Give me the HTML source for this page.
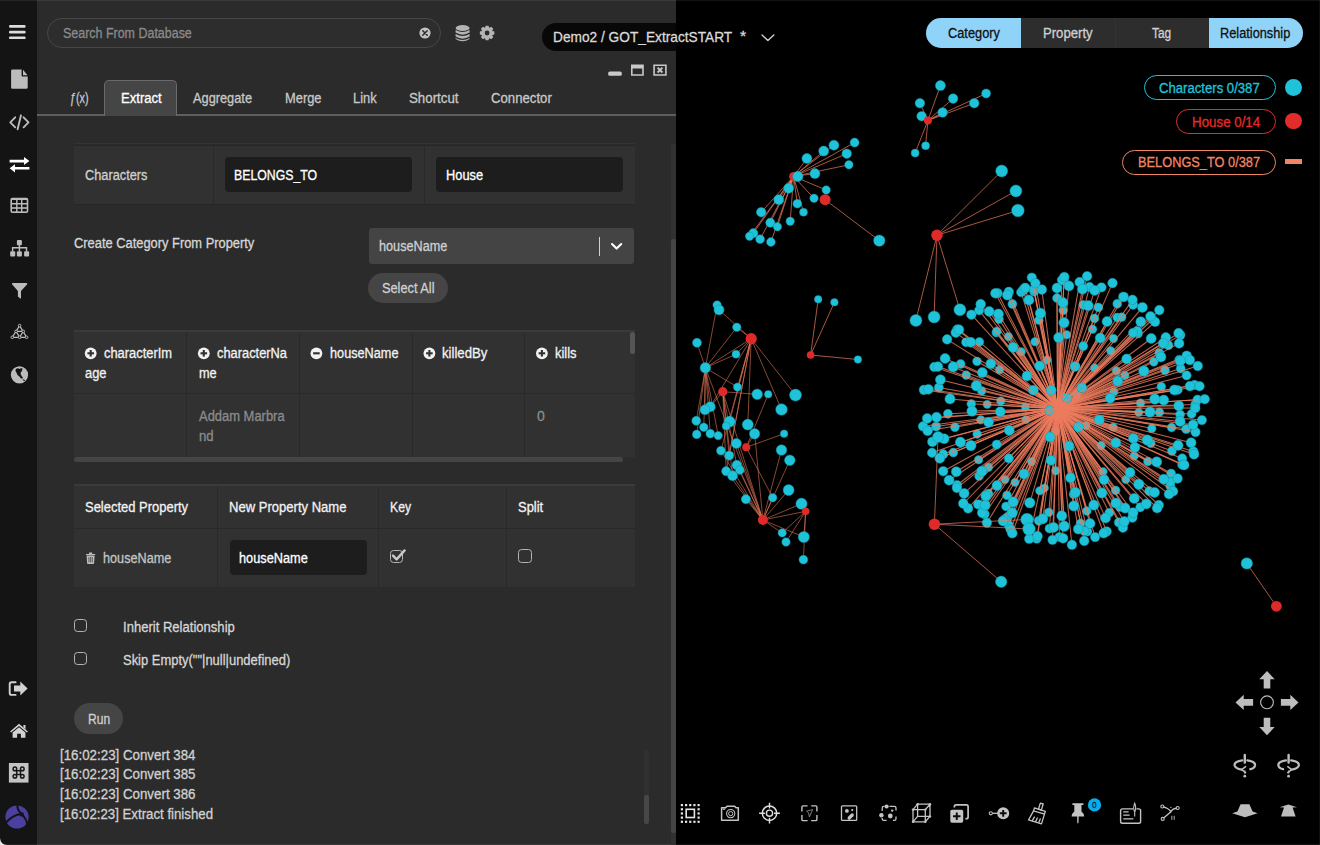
<!DOCTYPE html>
<html><head><meta charset="utf-8"><title>Graph Extract</title>
<style>
html,body{margin:0;padding:0;background:#000;}
body{width:1320px;height:845px;position:relative;overflow:hidden;font-family:"Liberation Sans", "DejaVu Sans", sans-serif;}
.b{position:absolute;}
.t{position:absolute;white-space:pre;line-height:20px;height:20px;transform-origin:0 50%;-webkit-text-stroke:0.3px currentColor;}
svg{position:absolute;overflow:visible;}
</style></head><body>
<svg width="1320" height="845" viewBox="0 0 1320 845" style="left:0;top:0">
<style>.n{stroke:#128fa3;stroke-width:0.6;stroke-opacity:0.8}</style>
<circle cx="1057.5" cy="408.6" r="4.0" fill="#df2a2a"/>
<line x1="1057.5" y1="408.6" x2="1138.7" y2="412.4" stroke="#ee7c5e" stroke-opacity="0.8" stroke-width="1.05"/>
<circle cx="1138.7" cy="412.4" r="4.2" fill="#1fc3d9" class="n"/>
<line x1="1057.5" y1="408.6" x2="1134.3" y2="455.9" stroke="#ee7c5e" stroke-opacity="0.8" stroke-width="1.05"/>
<circle cx="1134.3" cy="455.9" r="4.2" fill="#1fc3d9" class="n"/>
<line x1="1057.5" y1="408.6" x2="1125.8" y2="479.6" stroke="#ee7c5e" stroke-opacity="0.8" stroke-width="1.05"/>
<circle cx="1125.8" cy="479.6" r="4.2" fill="#1fc3d9" class="n"/>
<line x1="1057.5" y1="408.6" x2="1103.1" y2="471.6" stroke="#ee7c5e" stroke-opacity="0.8" stroke-width="1.05"/>
<circle cx="1103.1" cy="471.6" r="4.2" fill="#1fc3d9" class="n"/>
<line x1="1057.5" y1="408.6" x2="1044.4" y2="488.1" stroke="#ee7c5e" stroke-opacity="0.8" stroke-width="1.05"/>
<circle cx="1044.4" cy="488.1" r="4.2" fill="#1fc3d9" class="n"/>
<line x1="1057.5" y1="408.6" x2="1015.0" y2="482.4" stroke="#ee7c5e" stroke-opacity="0.8" stroke-width="1.05"/>
<circle cx="1015.0" cy="482.4" r="4.2" fill="#1fc3d9" class="n"/>
<line x1="1057.5" y1="408.6" x2="1005.0" y2="479.6" stroke="#ee7c5e" stroke-opacity="0.8" stroke-width="1.05"/>
<circle cx="1005.0" cy="479.6" r="4.2" fill="#1fc3d9" class="n"/>
<line x1="1057.5" y1="408.6" x2="988.5" y2="467.3" stroke="#ee7c5e" stroke-opacity="0.8" stroke-width="1.05"/>
<circle cx="988.5" cy="467.3" r="4.2" fill="#1fc3d9" class="n"/>
<line x1="1057.5" y1="408.6" x2="1055.7" y2="470.7" stroke="#ee7c5e" stroke-opacity="0.8" stroke-width="1.05"/>
<circle cx="1055.7" cy="470.7" r="4.2" fill="#1fc3d9" class="n"/>
<line x1="1057.5" y1="408.6" x2="1031.5" y2="461.6" stroke="#ee7c5e" stroke-opacity="0.8" stroke-width="1.05"/>
<circle cx="1031.5" cy="461.6" r="4.2" fill="#1fc3d9" class="n"/>
<line x1="1057.5" y1="408.6" x2="1101.2" y2="445.5" stroke="#ee7c5e" stroke-opacity="0.8" stroke-width="1.05"/>
<circle cx="1101.2" cy="445.5" r="4.2" fill="#1fc3d9" class="n"/>
<line x1="1057.5" y1="408.6" x2="1113.1" y2="427.1" stroke="#ee7c5e" stroke-opacity="0.8" stroke-width="1.05"/>
<circle cx="1113.1" cy="427.1" r="4.2" fill="#1fc3d9" class="n"/>
<line x1="1057.5" y1="408.6" x2="1086.0" y2="425.6" stroke="#ee7c5e" stroke-opacity="0.8" stroke-width="1.05"/>
<circle cx="1086.0" cy="425.6" r="4.2" fill="#1fc3d9" class="n"/>
<line x1="1057.5" y1="408.6" x2="1055.7" y2="431.3" stroke="#ee7c5e" stroke-opacity="0.8" stroke-width="1.05"/>
<circle cx="1055.7" cy="431.3" r="4.2" fill="#1fc3d9" class="n"/>
<line x1="1057.5" y1="408.6" x2="1026.0" y2="419.6" stroke="#ee7c5e" stroke-opacity="0.8" stroke-width="1.05"/>
<circle cx="1026.0" cy="419.6" r="4.2" fill="#1fc3d9" class="n"/>
<line x1="1057.5" y1="408.6" x2="987.2" y2="404.4" stroke="#ee7c5e" stroke-opacity="0.8" stroke-width="1.05"/>
<circle cx="987.2" cy="404.4" r="4.2" fill="#1fc3d9" class="n"/>
<line x1="1057.5" y1="408.6" x2="1000.8" y2="401.0" stroke="#ee7c5e" stroke-opacity="0.8" stroke-width="1.05"/>
<circle cx="1000.8" cy="401.0" r="4.2" fill="#1fc3d9" class="n"/>
<line x1="1057.5" y1="408.6" x2="1025.4" y2="407.1" stroke="#ee7c5e" stroke-opacity="0.8" stroke-width="1.05"/>
<circle cx="1025.4" cy="407.1" r="4.2" fill="#1fc3d9" class="n"/>
<line x1="1057.5" y1="408.6" x2="1076.6" y2="395.3" stroke="#ee7c5e" stroke-opacity="0.8" stroke-width="1.05"/>
<circle cx="1076.6" cy="395.3" r="4.2" fill="#1fc3d9" class="n"/>
<line x1="1057.5" y1="408.6" x2="1113.9" y2="391.9" stroke="#ee7c5e" stroke-opacity="0.8" stroke-width="1.05"/>
<circle cx="1113.9" cy="391.9" r="4.2" fill="#1fc3d9" class="n"/>
<line x1="1057.5" y1="408.6" x2="1124.9" y2="375.4" stroke="#ee7c5e" stroke-opacity="0.8" stroke-width="1.05"/>
<circle cx="1124.9" cy="375.4" r="4.2" fill="#1fc3d9" class="n"/>
<line x1="1057.5" y1="408.6" x2="1116.3" y2="370.7" stroke="#ee7c5e" stroke-opacity="0.8" stroke-width="1.05"/>
<circle cx="1116.3" cy="370.7" r="4.2" fill="#1fc3d9" class="n"/>
<line x1="1057.5" y1="408.6" x2="1113.5" y2="338.5" stroke="#ee7c5e" stroke-opacity="0.8" stroke-width="1.05"/>
<circle cx="1113.5" cy="338.5" r="4.2" fill="#1fc3d9" class="n"/>
<line x1="1057.5" y1="408.6" x2="1110.7" y2="350.8" stroke="#ee7c5e" stroke-opacity="0.8" stroke-width="1.05"/>
<circle cx="1110.7" cy="350.8" r="4.2" fill="#1fc3d9" class="n"/>
<line x1="1057.5" y1="408.6" x2="1094.6" y2="367.9" stroke="#ee7c5e" stroke-opacity="0.8" stroke-width="1.05"/>
<circle cx="1094.6" cy="367.9" r="4.2" fill="#1fc3d9" class="n"/>
<line x1="1057.5" y1="408.6" x2="1066.7" y2="334.7" stroke="#ee7c5e" stroke-opacity="0.8" stroke-width="1.05"/>
<circle cx="1066.7" cy="334.7" r="4.2" fill="#1fc3d9" class="n"/>
<line x1="1057.5" y1="408.6" x2="1047.2" y2="359.9" stroke="#ee7c5e" stroke-opacity="0.8" stroke-width="1.05"/>
<circle cx="1047.2" cy="359.9" r="4.2" fill="#1fc3d9" class="n"/>
<line x1="1057.5" y1="408.6" x2="999.5" y2="369.8" stroke="#ee7c5e" stroke-opacity="0.8" stroke-width="1.05"/>
<circle cx="999.5" cy="369.8" r="4.2" fill="#1fc3d9" class="n"/>
<line x1="1057.5" y1="408.6" x2="1021.3" y2="351.8" stroke="#ee7c5e" stroke-opacity="0.8" stroke-width="1.05"/>
<circle cx="1021.3" cy="351.8" r="4.2" fill="#1fc3d9" class="n"/>
<line x1="1057.5" y1="408.6" x2="1034.9" y2="341.7" stroke="#ee7c5e" stroke-opacity="0.8" stroke-width="1.05"/>
<circle cx="1034.9" cy="341.7" r="4.2" fill="#1fc3d9" class="n"/>
<line x1="1057.5" y1="408.6" x2="1008.4" y2="336.6" stroke="#ee7c5e" stroke-opacity="0.8" stroke-width="1.05"/>
<circle cx="1008.4" cy="336.6" r="4.2" fill="#1fc3d9" class="n"/>
<line x1="1057.5" y1="408.6" x2="996.1" y2="332.8" stroke="#ee7c5e" stroke-opacity="0.8" stroke-width="1.05"/>
<circle cx="996.1" cy="332.8" r="4.2" fill="#1fc3d9" class="n"/>
<line x1="1057.5" y1="408.6" x2="1140.5" y2="403.1" stroke="#ee7c5e" stroke-opacity="0.8" stroke-width="1.05"/>
<circle cx="1140.5" cy="403.1" r="4.3" fill="#1fc3d9" class="n"/>
<line x1="1057.5" y1="408.6" x2="980.8" y2="419.8" stroke="#ee7c5e" stroke-opacity="0.8" stroke-width="1.05"/>
<circle cx="980.8" cy="419.8" r="4.3" fill="#1fc3d9" class="n"/>
<line x1="1057.5" y1="408.6" x2="981.7" y2="390.9" stroke="#ee7c5e" stroke-opacity="0.8" stroke-width="1.05"/>
<circle cx="981.7" cy="390.9" r="4.3" fill="#1fc3d9" class="n"/>
<line x1="1057.5" y1="408.6" x2="1151.8" y2="428.5" stroke="#ee7c5e" stroke-opacity="0.8" stroke-width="1.05"/>
<circle cx="1151.8" cy="428.5" r="4.3" fill="#1fc3d9" class="n"/>
<line x1="1057.5" y1="408.6" x2="1092.6" y2="329.2" stroke="#ee7c5e" stroke-opacity="0.8" stroke-width="1.05"/>
<circle cx="1092.6" cy="329.2" r="4.3" fill="#1fc3d9" class="n"/>
<line x1="1057.5" y1="408.6" x2="1073.4" y2="494.3" stroke="#ee7c5e" stroke-opacity="0.8" stroke-width="1.05"/>
<circle cx="1073.4" cy="494.3" r="4.3" fill="#1fc3d9" class="n"/>
<line x1="1057.5" y1="408.6" x2="1039.8" y2="490.8" stroke="#ee7c5e" stroke-opacity="0.8" stroke-width="1.05"/>
<circle cx="1039.8" cy="490.8" r="4.3" fill="#1fc3d9" class="n"/>
<line x1="1057.5" y1="408.6" x2="978.6" y2="459.7" stroke="#ee7c5e" stroke-opacity="0.8" stroke-width="1.05"/>
<circle cx="978.6" cy="459.7" r="4.3" fill="#1fc3d9" class="n"/>
<line x1="1057.5" y1="408.6" x2="977.0" y2="361.3" stroke="#ee7c5e" stroke-opacity="0.8" stroke-width="1.05"/>
<circle cx="977.0" cy="361.3" r="4.4" fill="#1fc3d9" class="n"/>
<line x1="1057.5" y1="408.6" x2="977.2" y2="434.0" stroke="#ee7c5e" stroke-opacity="0.8" stroke-width="1.05"/>
<circle cx="977.2" cy="434.0" r="4.4" fill="#1fc3d9" class="n"/>
<line x1="1057.5" y1="408.6" x2="1159.4" y2="412.2" stroke="#ee7c5e" stroke-opacity="0.8" stroke-width="1.05"/>
<circle cx="1159.4" cy="412.2" r="4.4" fill="#1fc3d9" class="n"/>
<line x1="1057.5" y1="408.6" x2="971.3" y2="403.8" stroke="#ee7c5e" stroke-opacity="0.8" stroke-width="1.05"/>
<circle cx="971.3" cy="403.8" r="4.4" fill="#1fc3d9" class="n"/>
<line x1="1057.5" y1="408.6" x2="1094.5" y2="318.4" stroke="#ee7c5e" stroke-opacity="0.8" stroke-width="1.05"/>
<circle cx="1094.5" cy="318.4" r="4.4" fill="#1fc3d9" class="n"/>
<line x1="1057.5" y1="408.6" x2="1150.8" y2="443.3" stroke="#ee7c5e" stroke-opacity="0.8" stroke-width="1.05"/>
<circle cx="1150.8" cy="443.3" r="4.4" fill="#1fc3d9" class="n"/>
<line x1="1057.5" y1="408.6" x2="1161.3" y2="386.7" stroke="#ee7c5e" stroke-opacity="0.8" stroke-width="1.05"/>
<circle cx="1161.3" cy="386.7" r="4.4" fill="#1fc3d9" class="n"/>
<line x1="1057.5" y1="408.6" x2="996.8" y2="331.3" stroke="#ee7c5e" stroke-opacity="0.8" stroke-width="1.05"/>
<circle cx="996.8" cy="331.3" r="4.4" fill="#1fc3d9" class="n"/>
<line x1="1057.5" y1="408.6" x2="1115.6" y2="490.3" stroke="#ee7c5e" stroke-opacity="0.8" stroke-width="1.05"/>
<circle cx="1115.6" cy="490.3" r="4.4" fill="#1fc3d9" class="n"/>
<line x1="1057.5" y1="408.6" x2="1038.9" y2="320.2" stroke="#ee7c5e" stroke-opacity="0.8" stroke-width="1.05"/>
<circle cx="1038.9" cy="320.2" r="4.4" fill="#1fc3d9" class="n"/>
<line x1="1057.5" y1="408.6" x2="1063.2" y2="310.3" stroke="#ee7c5e" stroke-opacity="0.8" stroke-width="1.05"/>
<circle cx="1063.2" cy="310.3" r="4.4" fill="#1fc3d9" class="n"/>
<line x1="1057.5" y1="408.6" x2="1147.9" y2="461.5" stroke="#ee7c5e" stroke-opacity="0.8" stroke-width="1.05"/>
<circle cx="1147.9" cy="461.5" r="4.4" fill="#1fc3d9" class="n"/>
<line x1="1057.5" y1="408.6" x2="1117.2" y2="317.5" stroke="#ee7c5e" stroke-opacity="0.8" stroke-width="1.05"/>
<circle cx="1117.2" cy="317.5" r="4.4" fill="#1fc3d9" class="n"/>
<line x1="1057.5" y1="408.6" x2="1007.0" y2="495.3" stroke="#ee7c5e" stroke-opacity="0.8" stroke-width="1.05"/>
<circle cx="1007.0" cy="495.3" r="4.4" fill="#1fc3d9" class="n"/>
<line x1="1057.5" y1="408.6" x2="1086.8" y2="511.0" stroke="#ee7c5e" stroke-opacity="0.8" stroke-width="1.05"/>
<circle cx="1086.8" cy="511.0" r="4.4" fill="#1fc3d9" class="n"/>
<line x1="1057.5" y1="408.6" x2="1153.8" y2="361.8" stroke="#ee7c5e" stroke-opacity="0.8" stroke-width="1.05"/>
<circle cx="1153.8" cy="361.8" r="4.4" fill="#1fc3d9" class="n"/>
<line x1="1057.5" y1="408.6" x2="966.2" y2="375.1" stroke="#ee7c5e" stroke-opacity="0.8" stroke-width="1.05"/>
<circle cx="966.2" cy="375.1" r="4.4" fill="#1fc3d9" class="n"/>
<line x1="1057.5" y1="408.6" x2="954.9" y2="427.3" stroke="#ee7c5e" stroke-opacity="0.8" stroke-width="1.05"/>
<circle cx="954.9" cy="427.3" r="4.4" fill="#1fc3d9" class="n"/>
<line x1="1057.5" y1="408.6" x2="1048.8" y2="512.3" stroke="#ee7c5e" stroke-opacity="0.8" stroke-width="1.05"/>
<circle cx="1048.8" cy="512.3" r="4.4" fill="#1fc3d9" class="n"/>
<line x1="1057.5" y1="408.6" x2="1138.1" y2="333.7" stroke="#ee7c5e" stroke-opacity="0.8" stroke-width="1.05"/>
<circle cx="1138.1" cy="333.7" r="4.4" fill="#1fc3d9" class="n"/>
<line x1="1057.5" y1="408.6" x2="979.1" y2="476.2" stroke="#ee7c5e" stroke-opacity="0.8" stroke-width="1.05"/>
<circle cx="979.1" cy="476.2" r="4.4" fill="#1fc3d9" class="n"/>
<line x1="1057.5" y1="408.6" x2="979.4" y2="341.9" stroke="#ee7c5e" stroke-opacity="0.8" stroke-width="1.05"/>
<circle cx="979.4" cy="341.9" r="4.4" fill="#1fc3d9" class="n"/>
<line x1="1057.5" y1="408.6" x2="1119.8" y2="507.2" stroke="#ee7c5e" stroke-opacity="0.8" stroke-width="1.05"/>
<circle cx="1119.8" cy="507.2" r="4.4" fill="#1fc3d9" class="n"/>
<line x1="1057.5" y1="408.6" x2="1083.2" y2="304.9" stroke="#ee7c5e" stroke-opacity="0.8" stroke-width="1.05"/>
<circle cx="1083.2" cy="304.9" r="4.4" fill="#1fc3d9" class="n"/>
<line x1="1057.5" y1="408.6" x2="1171.6" y2="427.5" stroke="#ee7c5e" stroke-opacity="0.8" stroke-width="1.05"/>
<circle cx="1171.6" cy="427.5" r="4.4" fill="#1fc3d9" class="n"/>
<line x1="1057.5" y1="408.6" x2="999.0" y2="319.2" stroke="#ee7c5e" stroke-opacity="0.8" stroke-width="1.05"/>
<circle cx="999.0" cy="319.2" r="4.4" fill="#1fc3d9" class="n"/>
<line x1="1057.5" y1="408.6" x2="1121.7" y2="317.1" stroke="#ee7c5e" stroke-opacity="0.8" stroke-width="1.05"/>
<circle cx="1121.7" cy="317.1" r="4.4" fill="#1fc3d9" class="n"/>
<line x1="1057.5" y1="408.6" x2="1109.3" y2="512.8" stroke="#ee7c5e" stroke-opacity="0.8" stroke-width="1.05"/>
<circle cx="1109.3" cy="512.8" r="4.5" fill="#1fc3d9" class="n"/>
<line x1="1057.5" y1="408.6" x2="1165.0" y2="370.2" stroke="#ee7c5e" stroke-opacity="0.8" stroke-width="1.05"/>
<circle cx="1165.0" cy="370.2" r="4.5" fill="#1fc3d9" class="n"/>
<line x1="1057.5" y1="408.6" x2="1098.4" y2="307.4" stroke="#ee7c5e" stroke-opacity="0.8" stroke-width="1.05"/>
<circle cx="1098.4" cy="307.4" r="4.5" fill="#1fc3d9" class="n"/>
<line x1="1057.5" y1="408.6" x2="1080.6" y2="523.4" stroke="#ee7c5e" stroke-opacity="0.8" stroke-width="1.05"/>
<circle cx="1080.6" cy="523.4" r="4.5" fill="#1fc3d9" class="n"/>
<line x1="1057.5" y1="408.6" x2="1159.3" y2="353.0" stroke="#ee7c5e" stroke-opacity="0.8" stroke-width="1.05"/>
<circle cx="1159.3" cy="353.0" r="4.5" fill="#1fc3d9" class="n"/>
<line x1="1057.5" y1="408.6" x2="1006.1" y2="506.4" stroke="#ee7c5e" stroke-opacity="0.8" stroke-width="1.05"/>
<circle cx="1006.1" cy="506.4" r="4.5" fill="#1fc3d9" class="n"/>
<line x1="1057.5" y1="408.6" x2="1149.2" y2="491.1" stroke="#ee7c5e" stroke-opacity="0.8" stroke-width="1.05"/>
<circle cx="1149.2" cy="491.1" r="4.5" fill="#1fc3d9" class="n"/>
<line x1="1057.5" y1="408.6" x2="1038.7" y2="520.8" stroke="#ee7c5e" stroke-opacity="0.8" stroke-width="1.05"/>
<circle cx="1038.7" cy="520.8" r="4.5" fill="#1fc3d9" class="n"/>
<line x1="1057.5" y1="408.6" x2="966.0" y2="342.2" stroke="#ee7c5e" stroke-opacity="0.8" stroke-width="1.05"/>
<circle cx="966.0" cy="342.2" r="4.5" fill="#1fc3d9" class="n"/>
<line x1="1057.5" y1="408.6" x2="1057.0" y2="298.1" stroke="#ee7c5e" stroke-opacity="0.8" stroke-width="1.05"/>
<circle cx="1057.0" cy="298.1" r="4.5" fill="#1fc3d9" class="n"/>
<line x1="1057.5" y1="408.6" x2="960.6" y2="364.0" stroke="#ee7c5e" stroke-opacity="0.8" stroke-width="1.05"/>
<circle cx="960.6" cy="364.0" r="4.5" fill="#1fc3d9" class="n"/>
<line x1="1057.5" y1="408.6" x2="1180.1" y2="414.6" stroke="#ee7c5e" stroke-opacity="0.8" stroke-width="1.05"/>
<circle cx="1180.1" cy="414.6" r="4.5" fill="#1fc3d9" class="n"/>
<line x1="1057.5" y1="408.6" x2="1012.4" y2="304.0" stroke="#ee7c5e" stroke-opacity="0.8" stroke-width="1.05"/>
<circle cx="1012.4" cy="304.0" r="4.5" fill="#1fc3d9" class="n"/>
<line x1="1057.5" y1="408.6" x2="953.3" y2="452.6" stroke="#ee7c5e" stroke-opacity="0.8" stroke-width="1.05"/>
<circle cx="953.3" cy="452.6" r="4.5" fill="#1fc3d9" class="n"/>
<line x1="1057.5" y1="408.6" x2="1171.9" y2="451.0" stroke="#ee7c5e" stroke-opacity="0.8" stroke-width="1.05"/>
<circle cx="1171.9" cy="451.0" r="4.5" fill="#1fc3d9" class="n"/>
<line x1="1057.5" y1="408.6" x2="988.4" y2="493.6" stroke="#ee7c5e" stroke-opacity="0.8" stroke-width="1.05"/>
<circle cx="988.4" cy="493.6" r="4.5" fill="#1fc3d9" class="n"/>
<line x1="1057.5" y1="408.6" x2="1177.8" y2="389.9" stroke="#ee7c5e" stroke-opacity="0.8" stroke-width="1.05"/>
<circle cx="1177.8" cy="389.9" r="4.5" fill="#1fc3d9" class="n"/>
<line x1="1057.5" y1="408.6" x2="1049.5" y2="528.5" stroke="#ee7c5e" stroke-opacity="0.8" stroke-width="1.05"/>
<circle cx="1049.5" cy="528.5" r="4.5" fill="#1fc3d9" class="n"/>
<line x1="1057.5" y1="408.6" x2="947.9" y2="413.8" stroke="#ee7c5e" stroke-opacity="0.8" stroke-width="1.05"/>
<circle cx="947.9" cy="413.8" r="4.5" fill="#1fc3d9" class="n"/>
<line x1="1057.5" y1="408.6" x2="1034.0" y2="291.6" stroke="#ee7c5e" stroke-opacity="0.8" stroke-width="1.05"/>
<circle cx="1034.0" cy="291.6" r="4.5" fill="#1fc3d9" class="n"/>
<line x1="1057.5" y1="408.6" x2="1171.1" y2="473.5" stroke="#ee7c5e" stroke-opacity="0.8" stroke-width="1.05"/>
<circle cx="1171.1" cy="473.5" r="4.5" fill="#1fc3d9" class="n"/>
<line x1="1057.5" y1="408.6" x2="1064.3" y2="525.5" stroke="#ee7c5e" stroke-opacity="0.8" stroke-width="1.05"/>
<circle cx="1064.3" cy="525.5" r="4.5" fill="#1fc3d9" class="n"/>
<line x1="1057.5" y1="408.6" x2="1180.7" y2="368.5" stroke="#ee7c5e" stroke-opacity="0.8" stroke-width="1.05"/>
<circle cx="1180.7" cy="368.5" r="4.5" fill="#1fc3d9" class="n"/>
<line x1="1057.5" y1="408.6" x2="1117.3" y2="303.7" stroke="#ee7c5e" stroke-opacity="0.8" stroke-width="1.05"/>
<circle cx="1117.3" cy="303.7" r="4.5" fill="#1fc3d9" class="n"/>
<line x1="1057.5" y1="408.6" x2="1087.5" y2="531.6" stroke="#ee7c5e" stroke-opacity="0.8" stroke-width="1.05"/>
<circle cx="1087.5" cy="531.6" r="4.5" fill="#1fc3d9" class="n"/>
<line x1="1057.5" y1="408.6" x2="1008.1" y2="516.4" stroke="#ee7c5e" stroke-opacity="0.8" stroke-width="1.05"/>
<circle cx="1008.1" cy="516.4" r="4.5" fill="#1fc3d9" class="n"/>
<line x1="1057.5" y1="408.6" x2="1191.6" y2="413.9" stroke="#ee7c5e" stroke-opacity="0.8" stroke-width="1.05"/>
<circle cx="1191.6" cy="413.9" r="4.5" fill="#1fc3d9" class="n"/>
<line x1="1057.5" y1="408.6" x2="1152.5" y2="319.5" stroke="#ee7c5e" stroke-opacity="0.8" stroke-width="1.05"/>
<circle cx="1152.5" cy="319.5" r="4.5" fill="#1fc3d9" class="n"/>
<line x1="1057.5" y1="408.6" x2="1186.1" y2="429.0" stroke="#ee7c5e" stroke-opacity="0.8" stroke-width="1.05"/>
<circle cx="1186.1" cy="429.0" r="4.6" fill="#1fc3d9" class="n"/>
<line x1="1057.5" y1="408.6" x2="1089.6" y2="286.9" stroke="#ee7c5e" stroke-opacity="0.8" stroke-width="1.05"/>
<circle cx="1089.6" cy="286.9" r="4.6" fill="#1fc3d9" class="n"/>
<line x1="1057.5" y1="408.6" x2="1168.4" y2="345.2" stroke="#ee7c5e" stroke-opacity="0.8" stroke-width="1.05"/>
<circle cx="1168.4" cy="345.2" r="4.6" fill="#1fc3d9" class="n"/>
<line x1="1057.5" y1="408.6" x2="1021.1" y2="292.2" stroke="#ee7c5e" stroke-opacity="0.8" stroke-width="1.05"/>
<circle cx="1021.1" cy="292.2" r="4.6" fill="#1fc3d9" class="n"/>
<line x1="1057.5" y1="408.6" x2="1064.0" y2="280.5" stroke="#ee7c5e" stroke-opacity="0.8" stroke-width="1.05"/>
<circle cx="1064.0" cy="280.5" r="4.6" fill="#1fc3d9" class="n"/>
<line x1="1057.5" y1="408.6" x2="1059.4" y2="537.0" stroke="#ee7c5e" stroke-opacity="0.8" stroke-width="1.05"/>
<circle cx="1059.4" cy="537.0" r="4.6" fill="#1fc3d9" class="n"/>
<line x1="1057.5" y1="408.6" x2="1182.2" y2="458.4" stroke="#ee7c5e" stroke-opacity="0.8" stroke-width="1.05"/>
<circle cx="1182.2" cy="458.4" r="4.6" fill="#1fc3d9" class="n"/>
<line x1="1057.5" y1="408.6" x2="1170.4" y2="486.1" stroke="#ee7c5e" stroke-opacity="0.8" stroke-width="1.05"/>
<circle cx="1170.4" cy="486.1" r="4.6" fill="#1fc3d9" class="n"/>
<line x1="1057.5" y1="408.6" x2="1186.6" y2="375.4" stroke="#ee7c5e" stroke-opacity="0.8" stroke-width="1.05"/>
<circle cx="1186.6" cy="375.4" r="4.6" fill="#1fc3d9" class="n"/>
<line x1="1057.5" y1="408.6" x2="1118.8" y2="522.4" stroke="#ee7c5e" stroke-opacity="0.8" stroke-width="1.05"/>
<circle cx="1118.8" cy="522.4" r="4.6" fill="#1fc3d9" class="n"/>
<line x1="1057.5" y1="408.6" x2="1179.2" y2="359.9" stroke="#ee7c5e" stroke-opacity="0.8" stroke-width="1.05"/>
<circle cx="1179.2" cy="359.9" r="4.6" fill="#1fc3d9" class="n"/>
<line x1="1057.5" y1="408.6" x2="1195.3" y2="404.4" stroke="#ee7c5e" stroke-opacity="0.8" stroke-width="1.05"/>
<circle cx="1195.3" cy="404.4" r="4.6" fill="#1fc3d9" class="n"/>
<line x1="1057.5" y1="408.6" x2="1084.4" y2="531.0" stroke="#ee7c5e" stroke-opacity="0.8" stroke-width="1.05"/>
<circle cx="1084.4" cy="531.0" r="4.6" fill="#1fc3d9" class="n"/>
<line x1="1057.5" y1="408.6" x2="1033.9" y2="289.6" stroke="#ee7c5e" stroke-opacity="0.8" stroke-width="1.05"/>
<circle cx="1033.9" cy="289.6" r="4.6" fill="#1fc3d9" class="n"/>
<line x1="1057.5" y1="408.6" x2="957.1" y2="485.0" stroke="#ee7c5e" stroke-opacity="0.8" stroke-width="1.05"/>
<circle cx="957.1" cy="485.0" r="4.6" fill="#1fc3d9" class="n"/>
<line x1="1057.5" y1="408.6" x2="938.8" y2="387.6" stroke="#ee7c5e" stroke-opacity="0.8" stroke-width="1.05"/>
<circle cx="938.8" cy="387.6" r="4.6" fill="#1fc3d9" class="n"/>
<line x1="1057.5" y1="408.6" x2="1005.7" y2="518.5" stroke="#ee7c5e" stroke-opacity="0.8" stroke-width="1.05"/>
<circle cx="1005.7" cy="518.5" r="4.6" fill="#1fc3d9" class="n"/>
<line x1="1057.5" y1="408.6" x2="934.2" y2="366.9" stroke="#ee7c5e" stroke-opacity="0.8" stroke-width="1.05"/>
<circle cx="934.2" cy="366.9" r="4.6" fill="#1fc3d9" class="n"/>
<line x1="1057.5" y1="408.6" x2="1140.3" y2="507.3" stroke="#ee7c5e" stroke-opacity="0.8" stroke-width="1.05"/>
<circle cx="1140.3" cy="507.3" r="4.6" fill="#1fc3d9" class="n"/>
<line x1="1057.5" y1="408.6" x2="979.1" y2="310.3" stroke="#ee7c5e" stroke-opacity="0.8" stroke-width="1.05"/>
<circle cx="979.1" cy="310.3" r="4.6" fill="#1fc3d9" class="n"/>
<line x1="1057.5" y1="408.6" x2="936.1" y2="426.5" stroke="#ee7c5e" stroke-opacity="0.8" stroke-width="1.05"/>
<circle cx="936.1" cy="426.5" r="4.6" fill="#1fc3d9" class="n"/>
<line x1="1057.5" y1="408.6" x2="943.3" y2="454.2" stroke="#ee7c5e" stroke-opacity="0.8" stroke-width="1.05"/>
<circle cx="943.3" cy="454.2" r="4.6" fill="#1fc3d9" class="n"/>
<line x1="1057.5" y1="408.6" x2="1061.9" y2="280.0" stroke="#ee7c5e" stroke-opacity="0.8" stroke-width="1.05"/>
<circle cx="1061.9" cy="280.0" r="4.7" fill="#1fc3d9" class="n"/>
<line x1="1057.5" y1="408.6" x2="1194.5" y2="385.0" stroke="#ee7c5e" stroke-opacity="0.8" stroke-width="1.05"/>
<circle cx="1194.5" cy="385.0" r="4.7" fill="#1fc3d9" class="n"/>
<line x1="1057.5" y1="408.6" x2="1155.1" y2="321.9" stroke="#ee7c5e" stroke-opacity="0.8" stroke-width="1.05"/>
<circle cx="1155.1" cy="321.9" r="4.7" fill="#1fc3d9" class="n"/>
<line x1="1057.5" y1="408.6" x2="997.6" y2="293.1" stroke="#ee7c5e" stroke-opacity="0.8" stroke-width="1.05"/>
<circle cx="997.6" cy="293.1" r="4.7" fill="#1fc3d9" class="n"/>
<line x1="1057.5" y1="408.6" x2="1133.1" y2="304.7" stroke="#ee7c5e" stroke-opacity="0.8" stroke-width="1.05"/>
<circle cx="1133.1" cy="304.7" r="4.7" fill="#1fc3d9" class="n"/>
<line x1="1057.5" y1="408.6" x2="1036.7" y2="538.6" stroke="#ee7c5e" stroke-opacity="0.8" stroke-width="1.05"/>
<circle cx="1036.7" cy="538.6" r="4.7" fill="#1fc3d9" class="n"/>
<line x1="1057.5" y1="408.6" x2="978.1" y2="504.4" stroke="#ee7c5e" stroke-opacity="0.8" stroke-width="1.05"/>
<circle cx="978.1" cy="504.4" r="4.7" fill="#1fc3d9" class="n"/>
<line x1="1057.5" y1="408.6" x2="1101.5" y2="287.4" stroke="#ee7c5e" stroke-opacity="0.8" stroke-width="1.05"/>
<circle cx="1101.5" cy="287.4" r="4.7" fill="#1fc3d9" class="n"/>
<line x1="1057.5" y1="408.6" x2="1195.5" y2="432.1" stroke="#ee7c5e" stroke-opacity="0.8" stroke-width="1.05"/>
<circle cx="1195.5" cy="432.1" r="4.7" fill="#1fc3d9" class="n"/>
<line x1="1057.5" y1="408.6" x2="1170.3" y2="482.0" stroke="#ee7c5e" stroke-opacity="0.8" stroke-width="1.05"/>
<circle cx="1170.3" cy="482.0" r="4.7" fill="#1fc3d9" class="n"/>
<line x1="1057.5" y1="408.6" x2="1197.5" y2="399.7" stroke="#ee7c5e" stroke-opacity="0.8" stroke-width="1.05"/>
<circle cx="1197.5" cy="399.7" r="4.7" fill="#1fc3d9" class="n"/>
<line x1="1057.5" y1="408.6" x2="1180.4" y2="335.1" stroke="#ee7c5e" stroke-opacity="0.8" stroke-width="1.05"/>
<circle cx="1180.4" cy="335.1" r="4.7" fill="#1fc3d9" class="n"/>
<line x1="1057.5" y1="408.6" x2="1052.5" y2="539.9" stroke="#ee7c5e" stroke-opacity="0.8" stroke-width="1.05"/>
<circle cx="1052.5" cy="539.9" r="4.7" fill="#1fc3d9" class="n"/>
<line x1="1057.5" y1="408.6" x2="1182.3" y2="464.8" stroke="#ee7c5e" stroke-opacity="0.8" stroke-width="1.05"/>
<circle cx="1182.3" cy="464.8" r="4.7" fill="#1fc3d9" class="n"/>
<line x1="1057.5" y1="408.6" x2="1031.8" y2="277.6" stroke="#ee7c5e" stroke-opacity="0.8" stroke-width="1.05"/>
<circle cx="1031.8" cy="277.6" r="4.7" fill="#1fc3d9" class="n"/>
<line x1="1057.5" y1="408.6" x2="1008.7" y2="525.1" stroke="#ee7c5e" stroke-opacity="0.8" stroke-width="1.05"/>
<circle cx="1008.7" cy="525.1" r="4.7" fill="#1fc3d9" class="n"/>
<line x1="1057.5" y1="408.6" x2="1095.1" y2="537.1" stroke="#ee7c5e" stroke-opacity="0.8" stroke-width="1.05"/>
<circle cx="1095.1" cy="537.1" r="4.7" fill="#1fc3d9" class="n"/>
<line x1="1057.5" y1="408.6" x2="932.0" y2="452.8" stroke="#ee7c5e" stroke-opacity="0.8" stroke-width="1.05"/>
<circle cx="932.0" cy="452.8" r="4.7" fill="#1fc3d9" class="n"/>
<line x1="1057.5" y1="408.6" x2="957.2" y2="329.5" stroke="#ee7c5e" stroke-opacity="0.8" stroke-width="1.05"/>
<circle cx="957.2" cy="329.5" r="4.7" fill="#1fc3d9" class="n"/>
<line x1="1057.5" y1="408.6" x2="1201.9" y2="420.1" stroke="#ee7c5e" stroke-opacity="0.8" stroke-width="1.05"/>
<circle cx="1201.9" cy="420.1" r="4.7" fill="#1fc3d9" class="n"/>
<line x1="1057.5" y1="408.6" x2="1122.9" y2="527.7" stroke="#ee7c5e" stroke-opacity="0.8" stroke-width="1.05"/>
<circle cx="1122.9" cy="527.7" r="4.8" fill="#1fc3d9" class="n"/>
<line x1="1057.5" y1="408.6" x2="1132.5" y2="299.8" stroke="#ee7c5e" stroke-opacity="0.8" stroke-width="1.05"/>
<circle cx="1132.5" cy="299.8" r="4.8" fill="#1fc3d9" class="n"/>
<line x1="1057.5" y1="408.6" x2="1197.8" y2="366.0" stroke="#ee7c5e" stroke-opacity="0.8" stroke-width="1.05"/>
<circle cx="1197.8" cy="366.0" r="4.8" fill="#1fc3d9" class="n"/>
<line x1="1057.5" y1="408.6" x2="968.1" y2="508.4" stroke="#ee7c5e" stroke-opacity="0.8" stroke-width="1.05"/>
<circle cx="968.1" cy="508.4" r="4.8" fill="#1fc3d9" class="n"/>
<line x1="1057.5" y1="408.6" x2="984.5" y2="514.1" stroke="#ee7c5e" stroke-opacity="0.8" stroke-width="1.05"/>
<circle cx="984.5" cy="514.1" r="4.8" fill="#1fc3d9" class="n"/>
<line x1="1057.5" y1="408.6" x2="956.9" y2="487.9" stroke="#ee7c5e" stroke-opacity="0.8" stroke-width="1.05"/>
<circle cx="956.9" cy="487.9" r="4.8" fill="#1fc3d9" class="n"/>
<line x1="1057.5" y1="408.6" x2="1008.8" y2="291.9" stroke="#ee7c5e" stroke-opacity="0.8" stroke-width="1.05"/>
<circle cx="1008.8" cy="291.9" r="4.8" fill="#1fc3d9" class="n"/>
<line x1="1057.5" y1="408.6" x2="1159.3" y2="310.1" stroke="#ee7c5e" stroke-opacity="0.8" stroke-width="1.05"/>
<circle cx="1159.3" cy="310.1" r="4.8" fill="#1fc3d9" class="n"/>
<line x1="1057.5" y1="408.6" x2="923.9" y2="389.9" stroke="#ee7c5e" stroke-opacity="0.8" stroke-width="1.05"/>
<circle cx="923.9" cy="389.9" r="4.8" fill="#1fc3d9" class="n"/>
<line x1="1057.5" y1="408.6" x2="1029.2" y2="538.8" stroke="#ee7c5e" stroke-opacity="0.8" stroke-width="1.05"/>
<circle cx="1029.2" cy="538.8" r="4.8" fill="#1fc3d9" class="n"/>
<line x1="1057.5" y1="408.6" x2="1112.5" y2="283.1" stroke="#ee7c5e" stroke-opacity="0.8" stroke-width="1.05"/>
<circle cx="1112.5" cy="283.1" r="4.8" fill="#1fc3d9" class="n"/>
<line x1="1057.5" y1="408.6" x2="971.4" y2="314.7" stroke="#ee7c5e" stroke-opacity="0.8" stroke-width="1.05"/>
<circle cx="971.4" cy="314.7" r="4.8" fill="#1fc3d9" class="n"/>
<line x1="1057.5" y1="408.6" x2="923.1" y2="426.3" stroke="#ee7c5e" stroke-opacity="0.8" stroke-width="1.05"/>
<circle cx="923.1" cy="426.3" r="4.8" fill="#1fc3d9" class="n"/>
<line x1="1057.5" y1="408.6" x2="1158.8" y2="505.1" stroke="#ee7c5e" stroke-opacity="0.8" stroke-width="1.05"/>
<circle cx="1158.8" cy="505.1" r="4.8" fill="#1fc3d9" class="n"/>
<line x1="1057.5" y1="408.6" x2="1087.1" y2="276.2" stroke="#ee7c5e" stroke-opacity="0.8" stroke-width="1.05"/>
<circle cx="1087.1" cy="276.2" r="4.8" fill="#1fc3d9" class="n"/>
<line x1="1057.5" y1="408.6" x2="1084.2" y2="540.9" stroke="#ee7c5e" stroke-opacity="0.8" stroke-width="1.05"/>
<circle cx="1084.2" cy="540.9" r="4.8" fill="#1fc3d9" class="n"/>
<line x1="1057.5" y1="408.6" x2="1193.4" y2="451.6" stroke="#ee7c5e" stroke-opacity="0.8" stroke-width="1.05"/>
<circle cx="1193.4" cy="451.6" r="4.8" fill="#1fc3d9" class="n"/>
<line x1="1057.5" y1="408.6" x2="1204.7" y2="399.2" stroke="#ee7c5e" stroke-opacity="0.8" stroke-width="1.05"/>
<circle cx="1204.7" cy="399.2" r="4.8" fill="#1fc3d9" class="n"/>
<line x1="1057.5" y1="408.6" x2="1010.6" y2="529.5" stroke="#ee7c5e" stroke-opacity="0.8" stroke-width="1.05"/>
<circle cx="1010.6" cy="529.5" r="4.8" fill="#1fc3d9" class="n"/>
<line x1="1057.5" y1="408.6" x2="1173.1" y2="491.3" stroke="#ee7c5e" stroke-opacity="0.8" stroke-width="1.05"/>
<circle cx="1173.1" cy="491.3" r="4.8" fill="#1fc3d9" class="n"/>
<line x1="1057.5" y1="408.6" x2="947.1" y2="339.4" stroke="#ee7c5e" stroke-opacity="0.8" stroke-width="1.05"/>
<circle cx="947.1" cy="339.4" r="4.8" fill="#1fc3d9" class="n"/>
<line x1="1057.5" y1="408.6" x2="1177.6" y2="478.5" stroke="#ee7c5e" stroke-opacity="0.8" stroke-width="1.05"/>
<circle cx="1177.6" cy="478.5" r="4.8" fill="#1fc3d9" class="n"/>
<line x1="1057.5" y1="408.6" x2="1199.5" y2="386.2" stroke="#ee7c5e" stroke-opacity="0.8" stroke-width="1.05"/>
<circle cx="1199.5" cy="386.2" r="4.8" fill="#1fc3d9" class="n"/>
<line x1="1057.5" y1="408.6" x2="1035.4" y2="283.3" stroke="#ee7c5e" stroke-opacity="0.8" stroke-width="1.05"/>
<circle cx="1035.4" cy="283.3" r="4.8" fill="#1fc3d9" class="n"/>
<line x1="1057.5" y1="408.6" x2="986.9" y2="522.8" stroke="#ee7c5e" stroke-opacity="0.8" stroke-width="1.05"/>
<circle cx="986.9" cy="522.8" r="4.8" fill="#1fc3d9" class="n"/>
<line x1="1057.5" y1="408.6" x2="1071.9" y2="544.8" stroke="#ee7c5e" stroke-opacity="0.8" stroke-width="1.05"/>
<circle cx="1071.9" cy="544.8" r="4.8" fill="#1fc3d9" class="n"/>
<line x1="1057.5" y1="408.6" x2="1132.4" y2="517.6" stroke="#ee7c5e" stroke-opacity="0.8" stroke-width="1.05"/>
<circle cx="1132.4" cy="517.6" r="4.8" fill="#1fc3d9" class="n"/>
<line x1="1057.5" y1="408.6" x2="1186.7" y2="355.7" stroke="#ee7c5e" stroke-opacity="0.8" stroke-width="1.05"/>
<circle cx="1186.7" cy="355.7" r="4.8" fill="#1fc3d9" class="n"/>
<line x1="1057.5" y1="408.6" x2="1106.6" y2="531.5" stroke="#ee7c5e" stroke-opacity="0.8" stroke-width="1.05"/>
<circle cx="1106.6" cy="531.5" r="4.8" fill="#1fc3d9" class="n"/>
<line x1="1057.5" y1="408.6" x2="943.2" y2="471.2" stroke="#ee7c5e" stroke-opacity="0.8" stroke-width="1.05"/>
<circle cx="943.2" cy="471.2" r="4.8" fill="#1fc3d9" class="n"/>
<line x1="1057.5" y1="408.6" x2="1064.3" y2="277.0" stroke="#ee7c5e" stroke-opacity="0.8" stroke-width="1.05"/>
<circle cx="1064.3" cy="277.0" r="4.8" fill="#1fc3d9" class="n"/>
<line x1="1057.5" y1="408.6" x2="932.4" y2="441.8" stroke="#ee7c5e" stroke-opacity="0.8" stroke-width="1.05"/>
<circle cx="932.4" cy="441.8" r="4.9" fill="#1fc3d9" class="n"/>
<line x1="1057.5" y1="408.6" x2="1193.1" y2="424.8" stroke="#ee7c5e" stroke-opacity="0.8" stroke-width="1.05"/>
<circle cx="1193.1" cy="424.8" r="4.9" fill="#1fc3d9" class="n"/>
<line x1="1057.5" y1="408.6" x2="955.8" y2="332.6" stroke="#ee7c5e" stroke-opacity="0.8" stroke-width="1.05"/>
<circle cx="955.8" cy="332.6" r="4.9" fill="#1fc3d9" class="n"/>
<line x1="1057.5" y1="408.6" x2="980.7" y2="304.2" stroke="#ee7c5e" stroke-opacity="0.8" stroke-width="1.05"/>
<circle cx="980.7" cy="304.2" r="4.9" fill="#1fc3d9" class="n"/>
<line x1="1057.5" y1="408.6" x2="1178.6" y2="333.2" stroke="#ee7c5e" stroke-opacity="0.8" stroke-width="1.05"/>
<circle cx="1178.6" cy="333.2" r="4.9" fill="#1fc3d9" class="n"/>
<line x1="1057.5" y1="408.6" x2="927.2" y2="418.5" stroke="#ee7c5e" stroke-opacity="0.8" stroke-width="1.05"/>
<circle cx="927.2" cy="418.5" r="4.9" fill="#1fc3d9" class="n"/>
<line x1="1057.5" y1="408.6" x2="1023.3" y2="290.0" stroke="#ee7c5e" stroke-opacity="0.8" stroke-width="1.05"/>
<circle cx="1023.3" cy="290.0" r="4.9" fill="#1fc3d9" class="n"/>
<line x1="1057.5" y1="408.6" x2="1194.0" y2="454.3" stroke="#ee7c5e" stroke-opacity="0.8" stroke-width="1.05"/>
<circle cx="1194.0" cy="454.3" r="4.9" fill="#1fc3d9" class="n"/>
<line x1="1057.5" y1="408.6" x2="1195.2" y2="408.0" stroke="#ee7c5e" stroke-opacity="0.8" stroke-width="1.05"/>
<circle cx="1195.2" cy="408.0" r="4.9" fill="#1fc3d9" class="n"/>
<line x1="1057.5" y1="408.6" x2="1037.5" y2="536.1" stroke="#ee7c5e" stroke-opacity="0.8" stroke-width="1.05"/>
<circle cx="1037.5" cy="536.1" r="4.9" fill="#1fc3d9" class="n"/>
<line x1="1057.5" y1="408.6" x2="963.3" y2="503.5" stroke="#ee7c5e" stroke-opacity="0.8" stroke-width="1.05"/>
<circle cx="963.3" cy="503.5" r="4.9" fill="#1fc3d9" class="n"/>
<line x1="1057.5" y1="408.6" x2="1063.1" y2="538.3" stroke="#ee7c5e" stroke-opacity="0.8" stroke-width="1.05"/>
<circle cx="1063.1" cy="538.3" r="4.9" fill="#1fc3d9" class="n"/>
<line x1="1057.5" y1="408.6" x2="928.4" y2="389.3" stroke="#ee7c5e" stroke-opacity="0.8" stroke-width="1.05"/>
<circle cx="928.4" cy="389.3" r="4.9" fill="#1fc3d9" class="n"/>
<line x1="1057.5" y1="408.6" x2="1079.7" y2="282.1" stroke="#ee7c5e" stroke-opacity="0.8" stroke-width="1.05"/>
<circle cx="1079.7" cy="282.1" r="4.9" fill="#1fc3d9" class="n"/>
<line x1="1057.5" y1="408.6" x2="1150.5" y2="316.4" stroke="#ee7c5e" stroke-opacity="0.8" stroke-width="1.05"/>
<circle cx="1150.5" cy="316.4" r="4.9" fill="#1fc3d9" class="n"/>
<line x1="1057.5" y1="408.6" x2="937.9" y2="366.6" stroke="#ee7c5e" stroke-opacity="0.8" stroke-width="1.05"/>
<circle cx="937.9" cy="366.6" r="4.9" fill="#1fc3d9" class="n"/>
<line x1="1057.5" y1="408.6" x2="995.4" y2="293.3" stroke="#ee7c5e" stroke-opacity="0.8" stroke-width="1.05"/>
<circle cx="995.4" cy="293.3" r="4.9" fill="#1fc3d9" class="n"/>
<line x1="1057.5" y1="408.6" x2="1157.1" y2="508.1" stroke="#ee7c5e" stroke-opacity="0.8" stroke-width="1.05"/>
<circle cx="1157.1" cy="508.1" r="4.9" fill="#1fc3d9" class="n"/>
<line x1="1057.5" y1="408.6" x2="1169.0" y2="494.1" stroke="#ee7c5e" stroke-opacity="0.8" stroke-width="1.05"/>
<circle cx="1169.0" cy="494.1" r="4.9" fill="#1fc3d9" class="n"/>
<line x1="1057.5" y1="408.6" x2="1012.3" y2="533.2" stroke="#ee7c5e" stroke-opacity="0.8" stroke-width="1.05"/>
<circle cx="1012.3" cy="533.2" r="4.9" fill="#1fc3d9" class="n"/>
<line x1="1057.5" y1="408.6" x2="1179.1" y2="343.4" stroke="#ee7c5e" stroke-opacity="0.8" stroke-width="1.05"/>
<circle cx="1179.1" cy="343.4" r="4.9" fill="#1fc3d9" class="n"/>
<line x1="1057.5" y1="408.6" x2="1189.8" y2="360.0" stroke="#ee7c5e" stroke-opacity="0.8" stroke-width="1.05"/>
<circle cx="1189.8" cy="360.0" r="4.9" fill="#1fc3d9" class="n"/>
<line x1="1057.5" y1="408.6" x2="927.7" y2="430.8" stroke="#ee7c5e" stroke-opacity="0.8" stroke-width="1.05"/>
<circle cx="927.7" cy="430.8" r="4.9" fill="#1fc3d9" class="n"/>
<line x1="1057.5" y1="408.6" x2="1189.9" y2="386.1" stroke="#ee7c5e" stroke-opacity="0.8" stroke-width="1.05"/>
<circle cx="1189.9" cy="386.1" r="4.9" fill="#1fc3d9" class="n"/>
<line x1="1057.5" y1="408.6" x2="1103.7" y2="533.2" stroke="#ee7c5e" stroke-opacity="0.8" stroke-width="1.05"/>
<circle cx="1103.7" cy="533.2" r="4.9" fill="#1fc3d9" class="n"/>
<line x1="1057.5" y1="408.6" x2="1041.8" y2="289.6" stroke="#ee7c5e" stroke-opacity="0.8" stroke-width="1.05"/>
<circle cx="1041.8" cy="289.6" r="4.9" fill="#1fc3d9" class="n"/>
<line x1="1057.5" y1="408.6" x2="1165.8" y2="337.5" stroke="#ee7c5e" stroke-opacity="0.8" stroke-width="1.05"/>
<circle cx="1165.8" cy="337.5" r="4.9" fill="#1fc3d9" class="n"/>
<line x1="1057.5" y1="408.6" x2="1184.1" y2="465.0" stroke="#ee7c5e" stroke-opacity="0.8" stroke-width="1.05"/>
<circle cx="1184.1" cy="465.0" r="5.0" fill="#1fc3d9" class="n"/>
<line x1="1057.5" y1="408.6" x2="982.3" y2="512.7" stroke="#ee7c5e" stroke-opacity="0.8" stroke-width="1.05"/>
<circle cx="982.3" cy="512.7" r="5.0" fill="#1fc3d9" class="n"/>
<line x1="1057.5" y1="408.6" x2="939.8" y2="458.3" stroke="#ee7c5e" stroke-opacity="0.8" stroke-width="1.05"/>
<circle cx="939.8" cy="458.3" r="5.0" fill="#1fc3d9" class="n"/>
<line x1="1057.5" y1="408.6" x2="949.1" y2="480.2" stroke="#ee7c5e" stroke-opacity="0.8" stroke-width="1.05"/>
<circle cx="949.1" cy="480.2" r="5.0" fill="#1fc3d9" class="n"/>
<line x1="1057.5" y1="408.6" x2="1094.6" y2="290.4" stroke="#ee7c5e" stroke-opacity="0.8" stroke-width="1.05"/>
<circle cx="1094.6" cy="290.4" r="5.0" fill="#1fc3d9" class="n"/>
<line x1="1057.5" y1="408.6" x2="1123.5" y2="296.9" stroke="#ee7c5e" stroke-opacity="0.8" stroke-width="1.05"/>
<circle cx="1123.5" cy="296.9" r="5.0" fill="#1fc3d9" class="n"/>
<line x1="1057.5" y1="408.6" x2="1191.1" y2="442.7" stroke="#ee7c5e" stroke-opacity="0.8" stroke-width="1.05"/>
<circle cx="1191.1" cy="442.7" r="5.0" fill="#1fc3d9" class="n"/>
<line x1="1057.5" y1="408.6" x2="1133.1" y2="512.7" stroke="#ee7c5e" stroke-opacity="0.8" stroke-width="1.05"/>
<circle cx="1133.1" cy="512.7" r="5.0" fill="#1fc3d9" class="n"/>
<line x1="1057.5" y1="408.6" x2="1154.5" y2="492.4" stroke="#ee7c5e" stroke-opacity="0.8" stroke-width="1.05"/>
<circle cx="1154.5" cy="492.4" r="5.0" fill="#1fc3d9" class="n"/>
<line x1="1057.5" y1="408.6" x2="1142.4" y2="307.4" stroke="#ee7c5e" stroke-opacity="0.8" stroke-width="1.05"/>
<circle cx="1142.4" cy="307.4" r="5.0" fill="#1fc3d9" class="n"/>
<line x1="1057.5" y1="408.6" x2="989.2" y2="311.5" stroke="#ee7c5e" stroke-opacity="0.8" stroke-width="1.05"/>
<circle cx="989.2" cy="311.5" r="5.0" fill="#1fc3d9" class="n"/>
<line x1="1057.5" y1="408.6" x2="964.1" y2="493.4" stroke="#ee7c5e" stroke-opacity="0.8" stroke-width="1.05"/>
<circle cx="964.1" cy="493.4" r="5.0" fill="#1fc3d9" class="n"/>
<line x1="1057.5" y1="408.6" x2="1057.0" y2="288.0" stroke="#ee7c5e" stroke-opacity="0.8" stroke-width="1.05"/>
<circle cx="1057.0" cy="288.0" r="5.0" fill="#1fc3d9" class="n"/>
<line x1="1057.5" y1="408.6" x2="945.1" y2="358.5" stroke="#ee7c5e" stroke-opacity="0.8" stroke-width="1.05"/>
<circle cx="945.1" cy="358.5" r="5.0" fill="#1fc3d9" class="n"/>
<line x1="1057.5" y1="408.6" x2="958.9" y2="329.7" stroke="#ee7c5e" stroke-opacity="0.8" stroke-width="1.05"/>
<circle cx="958.9" cy="329.7" r="5.0" fill="#1fc3d9" class="n"/>
<line x1="1057.5" y1="408.6" x2="1007.4" y2="295.1" stroke="#ee7c5e" stroke-opacity="0.8" stroke-width="1.05"/>
<circle cx="1007.4" cy="295.1" r="5.0" fill="#1fc3d9" class="n"/>
<line x1="1057.5" y1="408.6" x2="1025.2" y2="288.0" stroke="#ee7c5e" stroke-opacity="0.8" stroke-width="1.05"/>
<circle cx="1025.2" cy="288.0" r="5.0" fill="#1fc3d9" class="n"/>
<line x1="1057.5" y1="408.6" x2="1003.1" y2="521.0" stroke="#ee7c5e" stroke-opacity="0.8" stroke-width="1.05"/>
<circle cx="1003.1" cy="521.0" r="5.0" fill="#1fc3d9" class="n"/>
<line x1="1057.5" y1="408.6" x2="940.4" y2="379.7" stroke="#ee7c5e" stroke-opacity="0.8" stroke-width="1.05"/>
<circle cx="940.4" cy="379.7" r="5.0" fill="#1fc3d9" class="n"/>
<line x1="1057.5" y1="408.6" x2="936.5" y2="417.3" stroke="#ee7c5e" stroke-opacity="0.8" stroke-width="1.05"/>
<circle cx="936.5" cy="417.3" r="5.0" fill="#1fc3d9" class="n"/>
<line x1="1057.5" y1="408.6" x2="1069.0" y2="286.0" stroke="#ee7c5e" stroke-opacity="0.8" stroke-width="1.05"/>
<circle cx="1069.0" cy="286.0" r="5.0" fill="#1fc3d9" class="n"/>
<line x1="1057.5" y1="408.6" x2="985.2" y2="505.1" stroke="#ee7c5e" stroke-opacity="0.8" stroke-width="1.05"/>
<circle cx="985.2" cy="505.1" r="5.0" fill="#1fc3d9" class="n"/>
<line x1="1057.5" y1="408.6" x2="1078.3" y2="529.1" stroke="#ee7c5e" stroke-opacity="0.8" stroke-width="1.05"/>
<circle cx="1078.3" cy="529.1" r="5.0" fill="#1fc3d9" class="n"/>
<line x1="1057.5" y1="408.6" x2="1124.3" y2="521.6" stroke="#ee7c5e" stroke-opacity="0.8" stroke-width="1.05"/>
<circle cx="1124.3" cy="521.6" r="5.0" fill="#1fc3d9" class="n"/>
<line x1="1057.5" y1="408.6" x2="1053.6" y2="527.4" stroke="#ee7c5e" stroke-opacity="0.8" stroke-width="1.05"/>
<circle cx="1053.6" cy="527.4" r="5.0" fill="#1fc3d9" class="n"/>
<line x1="1057.5" y1="408.6" x2="1146.3" y2="503.9" stroke="#ee7c5e" stroke-opacity="0.8" stroke-width="1.05"/>
<circle cx="1146.3" cy="503.9" r="5.0" fill="#1fc3d9" class="n"/>
<line x1="1057.5" y1="408.6" x2="956.3" y2="471.7" stroke="#ee7c5e" stroke-opacity="0.8" stroke-width="1.05"/>
<circle cx="956.3" cy="471.7" r="5.0" fill="#1fc3d9" class="n"/>
<line x1="1057.5" y1="408.6" x2="944.1" y2="438.8" stroke="#ee7c5e" stroke-opacity="0.8" stroke-width="1.05"/>
<circle cx="944.1" cy="438.8" r="5.0" fill="#1fc3d9" class="n"/>
<line x1="1057.5" y1="408.6" x2="1163.8" y2="479.2" stroke="#ee7c5e" stroke-opacity="0.8" stroke-width="1.05"/>
<circle cx="1163.8" cy="479.2" r="5.0" fill="#1fc3d9" class="n"/>
<line x1="1057.5" y1="408.6" x2="1180.3" y2="360.9" stroke="#ee7c5e" stroke-opacity="0.8" stroke-width="1.05"/>
<circle cx="1180.3" cy="360.9" r="5.0" fill="#1fc3d9" class="n"/>
<line x1="1057.5" y1="408.6" x2="970.8" y2="342.2" stroke="#ee7c5e" stroke-opacity="0.8" stroke-width="1.05"/>
<circle cx="970.8" cy="342.2" r="5.0" fill="#1fc3d9" class="n"/>
<line x1="1057.5" y1="408.6" x2="1140.8" y2="321.8" stroke="#ee7c5e" stroke-opacity="0.8" stroke-width="1.05"/>
<circle cx="1140.8" cy="321.8" r="5.0" fill="#1fc3d9" class="n"/>
<line x1="1057.5" y1="408.6" x2="1163.3" y2="343.3" stroke="#ee7c5e" stroke-opacity="0.8" stroke-width="1.05"/>
<circle cx="1163.3" cy="343.3" r="5.0" fill="#1fc3d9" class="n"/>
<line x1="1057.5" y1="408.6" x2="1125.1" y2="508.1" stroke="#ee7c5e" stroke-opacity="0.8" stroke-width="1.05"/>
<circle cx="1125.1" cy="508.1" r="5.0" fill="#1fc3d9" class="n"/>
<line x1="1057.5" y1="408.6" x2="1064.2" y2="526.4" stroke="#ee7c5e" stroke-opacity="0.8" stroke-width="1.05"/>
<circle cx="1064.2" cy="526.4" r="5.1" fill="#1fc3d9" class="n"/>
<line x1="1057.5" y1="408.6" x2="1082.5" y2="289.1" stroke="#ee7c5e" stroke-opacity="0.8" stroke-width="1.05"/>
<circle cx="1082.5" cy="289.1" r="5.1" fill="#1fc3d9" class="n"/>
<line x1="1057.5" y1="408.6" x2="1180.1" y2="421.4" stroke="#ee7c5e" stroke-opacity="0.8" stroke-width="1.05"/>
<circle cx="1180.1" cy="421.4" r="5.1" fill="#1fc3d9" class="n"/>
<line x1="1057.5" y1="408.6" x2="1028.9" y2="300.0" stroke="#ee7c5e" stroke-opacity="0.8" stroke-width="1.05"/>
<circle cx="1028.9" cy="300.0" r="5.1" fill="#1fc3d9" class="n"/>
<line x1="1057.5" y1="408.6" x2="1105.5" y2="518.0" stroke="#ee7c5e" stroke-opacity="0.8" stroke-width="1.05"/>
<circle cx="1105.5" cy="518.0" r="5.1" fill="#1fc3d9" class="n"/>
<line x1="1057.5" y1="408.6" x2="985.9" y2="495.9" stroke="#ee7c5e" stroke-opacity="0.8" stroke-width="1.05"/>
<circle cx="985.9" cy="495.9" r="5.1" fill="#1fc3d9" class="n"/>
<line x1="1057.5" y1="408.6" x2="1178.0" y2="445.3" stroke="#ee7c5e" stroke-opacity="0.8" stroke-width="1.05"/>
<circle cx="1178.0" cy="445.3" r="5.1" fill="#1fc3d9" class="n"/>
<line x1="1057.5" y1="408.6" x2="1012.2" y2="512.9" stroke="#ee7c5e" stroke-opacity="0.8" stroke-width="1.05"/>
<circle cx="1012.2" cy="512.9" r="5.1" fill="#1fc3d9" class="n"/>
<line x1="1057.5" y1="408.6" x2="1090.0" y2="523.5" stroke="#ee7c5e" stroke-opacity="0.8" stroke-width="1.05"/>
<circle cx="1090.0" cy="523.5" r="5.1" fill="#1fc3d9" class="n"/>
<line x1="1057.5" y1="408.6" x2="1151.2" y2="338.5" stroke="#ee7c5e" stroke-opacity="0.8" stroke-width="1.05"/>
<circle cx="1151.2" cy="338.5" r="5.1" fill="#1fc3d9" class="n"/>
<line x1="1057.5" y1="408.6" x2="960.4" y2="442.2" stroke="#ee7c5e" stroke-opacity="0.8" stroke-width="1.05"/>
<circle cx="960.4" cy="442.2" r="5.1" fill="#1fc3d9" class="n"/>
<line x1="1057.5" y1="408.6" x2="953.2" y2="366.9" stroke="#ee7c5e" stroke-opacity="0.8" stroke-width="1.05"/>
<circle cx="953.2" cy="366.9" r="5.1" fill="#1fc3d9" class="n"/>
<line x1="1057.5" y1="408.6" x2="1042.8" y2="518.8" stroke="#ee7c5e" stroke-opacity="0.8" stroke-width="1.05"/>
<circle cx="1042.8" cy="518.8" r="5.1" fill="#1fc3d9" class="n"/>
<line x1="1057.5" y1="408.6" x2="1178.8" y2="405.8" stroke="#ee7c5e" stroke-opacity="0.8" stroke-width="1.05"/>
<circle cx="1178.8" cy="405.8" r="5.1" fill="#1fc3d9" class="n"/>
<line x1="1057.5" y1="408.6" x2="998.4" y2="314.0" stroke="#ee7c5e" stroke-opacity="0.8" stroke-width="1.05"/>
<circle cx="998.4" cy="314.0" r="5.1" fill="#1fc3d9" class="n"/>
<line x1="1057.5" y1="408.6" x2="1061.8" y2="515.8" stroke="#ee7c5e" stroke-opacity="0.8" stroke-width="1.05"/>
<circle cx="1061.8" cy="515.8" r="5.1" fill="#1fc3d9" class="n"/>
<line x1="1057.5" y1="408.6" x2="1156.7" y2="461.9" stroke="#ee7c5e" stroke-opacity="0.8" stroke-width="1.05"/>
<circle cx="1156.7" cy="461.9" r="5.1" fill="#1fc3d9" class="n"/>
<line x1="1057.5" y1="408.6" x2="1088.2" y2="305.7" stroke="#ee7c5e" stroke-opacity="0.8" stroke-width="1.05"/>
<circle cx="1088.2" cy="305.7" r="5.1" fill="#1fc3d9" class="n"/>
<line x1="1057.5" y1="408.6" x2="1062.9" y2="302.6" stroke="#ee7c5e" stroke-opacity="0.8" stroke-width="1.05"/>
<circle cx="1062.9" cy="302.6" r="5.1" fill="#1fc3d9" class="n"/>
<line x1="1057.5" y1="408.6" x2="950.0" y2="398.9" stroke="#ee7c5e" stroke-opacity="0.8" stroke-width="1.05"/>
<circle cx="950.0" cy="398.9" r="5.1" fill="#1fc3d9" class="n"/>
<line x1="1057.5" y1="408.6" x2="1134.2" y2="498.5" stroke="#ee7c5e" stroke-opacity="0.8" stroke-width="1.05"/>
<circle cx="1134.2" cy="498.5" r="5.1" fill="#1fc3d9" class="n"/>
<line x1="1057.5" y1="408.6" x2="1174.4" y2="390.0" stroke="#ee7c5e" stroke-opacity="0.8" stroke-width="1.05"/>
<circle cx="1174.4" cy="390.0" r="5.1" fill="#1fc3d9" class="n"/>
<line x1="1057.5" y1="408.6" x2="1093.8" y2="505.1" stroke="#ee7c5e" stroke-opacity="0.8" stroke-width="1.05"/>
<circle cx="1093.8" cy="505.1" r="5.1" fill="#1fc3d9" class="n"/>
<line x1="1057.5" y1="408.6" x2="1137.1" y2="331.5" stroke="#ee7c5e" stroke-opacity="0.8" stroke-width="1.05"/>
<circle cx="1137.1" cy="331.5" r="5.1" fill="#1fc3d9" class="n"/>
<line x1="1057.5" y1="408.6" x2="1160.9" y2="356.9" stroke="#ee7c5e" stroke-opacity="0.8" stroke-width="1.05"/>
<circle cx="1160.9" cy="356.9" r="5.1" fill="#1fc3d9" class="n"/>
<line x1="1057.5" y1="408.6" x2="1107.1" y2="321.5" stroke="#ee7c5e" stroke-opacity="0.8" stroke-width="1.05"/>
<circle cx="1107.1" cy="321.5" r="5.1" fill="#1fc3d9" class="n"/>
<line x1="1057.5" y1="408.6" x2="1115.9" y2="503.2" stroke="#ee7c5e" stroke-opacity="0.8" stroke-width="1.05"/>
<circle cx="1115.9" cy="503.2" r="5.1" fill="#1fc3d9" class="n"/>
<line x1="1057.5" y1="408.6" x2="1013.1" y2="501.9" stroke="#ee7c5e" stroke-opacity="0.8" stroke-width="1.05"/>
<circle cx="1013.1" cy="501.9" r="5.1" fill="#1fc3d9" class="n"/>
<line x1="1057.5" y1="408.6" x2="1163.7" y2="400.1" stroke="#ee7c5e" stroke-opacity="0.8" stroke-width="1.05"/>
<circle cx="1163.7" cy="400.1" r="5.1" fill="#1fc3d9" class="n"/>
<line x1="1057.5" y1="408.6" x2="1138.8" y2="484.2" stroke="#ee7c5e" stroke-opacity="0.8" stroke-width="1.05"/>
<circle cx="1138.8" cy="484.2" r="5.2" fill="#1fc3d9" class="n"/>
<line x1="1057.5" y1="408.6" x2="1040.4" y2="313.3" stroke="#ee7c5e" stroke-opacity="0.8" stroke-width="1.05"/>
<circle cx="1040.4" cy="313.3" r="5.2" fill="#1fc3d9" class="n"/>
<line x1="1057.5" y1="408.6" x2="981.8" y2="471.2" stroke="#ee7c5e" stroke-opacity="0.8" stroke-width="1.05"/>
<circle cx="981.8" cy="471.2" r="5.2" fill="#1fc3d9" class="n"/>
<line x1="1057.5" y1="408.6" x2="972.0" y2="411.1" stroke="#ee7c5e" stroke-opacity="0.8" stroke-width="1.05"/>
<circle cx="972.0" cy="411.1" r="5.2" fill="#1fc3d9" class="n"/>
<line x1="1057.5" y1="408.6" x2="1154.8" y2="399.0" stroke="#ee7c5e" stroke-opacity="0.8" stroke-width="1.05"/>
<circle cx="1154.8" cy="399.0" r="5.2" fill="#1fc3d9" class="n"/>
<line x1="1057.5" y1="408.6" x2="976.3" y2="385.7" stroke="#ee7c5e" stroke-opacity="0.8" stroke-width="1.05"/>
<circle cx="976.3" cy="385.7" r="5.2" fill="#1fc3d9" class="n"/>
<line x1="1057.5" y1="408.6" x2="1101.8" y2="492.9" stroke="#ee7c5e" stroke-opacity="0.8" stroke-width="1.05"/>
<circle cx="1101.8" cy="492.9" r="5.2" fill="#1fc3d9" class="n"/>
<line x1="1057.5" y1="408.6" x2="1029.8" y2="502.8" stroke="#ee7c5e" stroke-opacity="0.8" stroke-width="1.05"/>
<circle cx="1029.8" cy="502.8" r="5.2" fill="#1fc3d9" class="n"/>
<line x1="1057.5" y1="408.6" x2="1073.8" y2="505.9" stroke="#ee7c5e" stroke-opacity="0.8" stroke-width="1.05"/>
<circle cx="1073.8" cy="505.9" r="5.2" fill="#1fc3d9" class="n"/>
<line x1="1057.5" y1="408.6" x2="1150.0" y2="412.0" stroke="#ee7c5e" stroke-opacity="0.8" stroke-width="1.05"/>
<circle cx="1150.0" cy="412.0" r="5.2" fill="#1fc3d9" class="n"/>
<line x1="1057.5" y1="408.6" x2="970.9" y2="445.5" stroke="#ee7c5e" stroke-opacity="0.8" stroke-width="1.05"/>
<circle cx="970.9" cy="445.5" r="5.2" fill="#1fc3d9" class="n"/>
<line x1="1057.5" y1="408.6" x2="1147.3" y2="440.0" stroke="#ee7c5e" stroke-opacity="0.8" stroke-width="1.05"/>
<circle cx="1147.3" cy="440.0" r="5.2" fill="#1fc3d9" class="n"/>
<line x1="1057.5" y1="408.6" x2="1064.0" y2="322.6" stroke="#ee7c5e" stroke-opacity="0.8" stroke-width="1.05"/>
<circle cx="1064.0" cy="322.6" r="5.2" fill="#1fc3d9" class="n"/>
<line x1="1057.5" y1="408.6" x2="1143.8" y2="371.0" stroke="#ee7c5e" stroke-opacity="0.8" stroke-width="1.05"/>
<circle cx="1143.8" cy="371.0" r="5.2" fill="#1fc3d9" class="n"/>
<line x1="1057.5" y1="408.6" x2="1049.7" y2="410.5" stroke="#ee7c5e" stroke-opacity="0.8" stroke-width="1.05"/>
<circle cx="1049.7" cy="410.5" r="5.0" fill="#1fc3d9" class="n"/>
<line x1="1057.5" y1="408.6" x2="1066.7" y2="398.2" stroke="#ee7c5e" stroke-opacity="0.8" stroke-width="1.05"/>
<circle cx="1066.7" cy="398.2" r="5.0" fill="#1fc3d9" class="n"/>
<line x1="1057.5" y1="408.6" x2="1051.2" y2="390.2" stroke="#ee7c5e" stroke-opacity="0.8" stroke-width="1.05"/>
<circle cx="1051.2" cy="390.2" r="5.0" fill="#1fc3d9" class="n"/>
<line x1="1057.5" y1="408.6" x2="1075.3" y2="492.4" stroke="#ee7c5e" stroke-opacity="0.8" stroke-width="1.05"/>
<circle cx="1075.3" cy="492.4" r="5.2" fill="#1fc3d9" class="n"/>
<line x1="1057.5" y1="408.6" x2="1033.4" y2="390.2" stroke="#ee7c5e" stroke-opacity="0.8" stroke-width="1.05"/>
<circle cx="1033.4" cy="390.2" r="5.0" fill="#1fc3d9" class="n"/>
<line x1="1057.5" y1="408.6" x2="1081.9" y2="387.8" stroke="#ee7c5e" stroke-opacity="0.8" stroke-width="1.05"/>
<circle cx="1081.9" cy="387.8" r="5.0" fill="#1fc3d9" class="n"/>
<line x1="1057.5" y1="408.6" x2="1027.0" y2="376.0" stroke="#ee7c5e" stroke-opacity="0.8" stroke-width="1.05"/>
<circle cx="1027.0" cy="376.0" r="5.0" fill="#1fc3d9" class="n"/>
<line x1="1057.5" y1="408.6" x2="1039.6" y2="366.0" stroke="#ee7c5e" stroke-opacity="0.8" stroke-width="1.05"/>
<circle cx="1039.6" cy="366.0" r="5.0" fill="#1fc3d9" class="n"/>
<line x1="1057.5" y1="408.6" x2="1075.1" y2="366.4" stroke="#ee7c5e" stroke-opacity="0.8" stroke-width="1.05"/>
<circle cx="1075.1" cy="366.4" r="5.0" fill="#1fc3d9" class="n"/>
<line x1="1057.5" y1="408.6" x2="1013.1" y2="347.4" stroke="#ee7c5e" stroke-opacity="0.8" stroke-width="1.05"/>
<circle cx="1013.1" cy="347.4" r="5.0" fill="#1fc3d9" class="n"/>
<line x1="1057.5" y1="408.6" x2="990.8" y2="363.7" stroke="#ee7c5e" stroke-opacity="0.8" stroke-width="1.05"/>
<circle cx="990.8" cy="363.7" r="5.0" fill="#1fc3d9" class="n"/>
<line x1="1057.5" y1="408.6" x2="982.3" y2="372.6" stroke="#ee7c5e" stroke-opacity="0.8" stroke-width="1.05"/>
<circle cx="982.3" cy="372.6" r="5.0" fill="#1fc3d9" class="n"/>
<line x1="1057.5" y1="408.6" x2="1058.6" y2="337.6" stroke="#ee7c5e" stroke-opacity="0.8" stroke-width="1.05"/>
<circle cx="1058.6" cy="337.6" r="5.0" fill="#1fc3d9" class="n"/>
<line x1="1057.5" y1="408.6" x2="1100.2" y2="338.0" stroke="#ee7c5e" stroke-opacity="0.8" stroke-width="1.05"/>
<circle cx="1100.2" cy="338.0" r="5.0" fill="#1fc3d9" class="n"/>
<line x1="1057.5" y1="408.6" x2="1126.7" y2="359.0" stroke="#ee7c5e" stroke-opacity="0.8" stroke-width="1.05"/>
<circle cx="1126.7" cy="359.0" r="5.0" fill="#1fc3d9" class="n"/>
<line x1="1057.5" y1="408.6" x2="1117.7" y2="381.1" stroke="#ee7c5e" stroke-opacity="0.8" stroke-width="1.05"/>
<circle cx="1117.7" cy="381.1" r="5.0" fill="#1fc3d9" class="n"/>
<line x1="1057.5" y1="408.6" x2="1110.1" y2="398.2" stroke="#ee7c5e" stroke-opacity="0.8" stroke-width="1.05"/>
<circle cx="1110.1" cy="398.2" r="5.0" fill="#1fc3d9" class="n"/>
<line x1="1057.5" y1="408.6" x2="1099.3" y2="419.9" stroke="#ee7c5e" stroke-opacity="0.8" stroke-width="1.05"/>
<circle cx="1099.3" cy="419.9" r="5.0" fill="#1fc3d9" class="n"/>
<line x1="1057.5" y1="408.6" x2="1078.5" y2="427.1" stroke="#ee7c5e" stroke-opacity="0.8" stroke-width="1.05"/>
<circle cx="1078.5" cy="427.1" r="5.0" fill="#1fc3d9" class="n"/>
<line x1="1057.5" y1="408.6" x2="1050.1" y2="437.0" stroke="#ee7c5e" stroke-opacity="0.8" stroke-width="1.05"/>
<circle cx="1050.1" cy="437.0" r="5.0" fill="#1fc3d9" class="n"/>
<line x1="1057.5" y1="408.6" x2="1069.0" y2="446.1" stroke="#ee7c5e" stroke-opacity="0.8" stroke-width="1.05"/>
<circle cx="1069.0" cy="446.1" r="5.0" fill="#1fc3d9" class="n"/>
<line x1="1057.5" y1="408.6" x2="1115.8" y2="442.7" stroke="#ee7c5e" stroke-opacity="0.8" stroke-width="1.05"/>
<circle cx="1115.8" cy="442.7" r="5.0" fill="#1fc3d9" class="n"/>
<line x1="1057.5" y1="408.6" x2="1133.4" y2="438.5" stroke="#ee7c5e" stroke-opacity="0.8" stroke-width="1.05"/>
<circle cx="1133.4" cy="438.5" r="5.0" fill="#1fc3d9" class="n"/>
<line x1="1057.5" y1="408.6" x2="1134.9" y2="447.4" stroke="#ee7c5e" stroke-opacity="0.8" stroke-width="1.05"/>
<circle cx="1134.9" cy="447.4" r="5.0" fill="#1fc3d9" class="n"/>
<line x1="1057.5" y1="408.6" x2="1009.3" y2="430.4" stroke="#ee7c5e" stroke-opacity="0.8" stroke-width="1.05"/>
<circle cx="1009.3" cy="430.4" r="5.0" fill="#1fc3d9" class="n"/>
<line x1="1057.5" y1="408.6" x2="1000.3" y2="411.8" stroke="#ee7c5e" stroke-opacity="0.8" stroke-width="1.05"/>
<circle cx="1000.3" cy="411.8" r="5.0" fill="#1fc3d9" class="n"/>
<line x1="1057.5" y1="408.6" x2="988.5" y2="422.2" stroke="#ee7c5e" stroke-opacity="0.8" stroke-width="1.05"/>
<circle cx="988.5" cy="422.2" r="5.0" fill="#1fc3d9" class="n"/>
<line x1="1057.5" y1="408.6" x2="1051.0" y2="460.3" stroke="#ee7c5e" stroke-opacity="0.8" stroke-width="1.05"/>
<circle cx="1051.0" cy="460.3" r="5.0" fill="#1fc3d9" class="n"/>
<line x1="1057.5" y1="408.6" x2="1070.5" y2="477.7" stroke="#ee7c5e" stroke-opacity="0.8" stroke-width="1.05"/>
<circle cx="1070.5" cy="477.7" r="5.0" fill="#1fc3d9" class="n"/>
<line x1="1057.5" y1="408.6" x2="1023.9" y2="473.9" stroke="#ee7c5e" stroke-opacity="0.8" stroke-width="1.05"/>
<circle cx="1023.9" cy="473.9" r="5.0" fill="#1fc3d9" class="n"/>
<line x1="1057.5" y1="408.6" x2="1104.0" y2="479.6" stroke="#ee7c5e" stroke-opacity="0.8" stroke-width="1.05"/>
<circle cx="1104.0" cy="479.6" r="5.0" fill="#1fc3d9" class="n"/>
<line x1="1057.5" y1="408.6" x2="1130.0" y2="472.4" stroke="#ee7c5e" stroke-opacity="0.8" stroke-width="1.05"/>
<circle cx="1130.0" cy="472.4" r="5.0" fill="#1fc3d9" class="n"/>
<line x1="1057.5" y1="408.6" x2="997.0" y2="485.6" stroke="#ee7c5e" stroke-opacity="0.8" stroke-width="1.05"/>
<circle cx="997.0" cy="485.6" r="5.0" fill="#1fc3d9" class="n"/>
<line x1="1057.5" y1="408.6" x2="1133.0" y2="332.8" stroke="#ee7c5e" stroke-opacity="0.8" stroke-width="1.05"/>
<circle cx="1133.0" cy="332.8" r="4.6" fill="#1fc3d9" class="n"/>
<line x1="1057.5" y1="408.6" x2="1083.2" y2="346.1" stroke="#ee7c5e" stroke-opacity="0.8" stroke-width="1.05"/>
<circle cx="1083.2" cy="346.1" r="4.6" fill="#1fc3d9" class="n"/>
<line x1="1057.5" y1="408.6" x2="996.7" y2="444.6" stroke="#ee7c5e" stroke-opacity="0.8" stroke-width="1.05"/>
<circle cx="996.7" cy="444.6" r="4.6" fill="#1fc3d9" class="n"/>
<line x1="1057.5" y1="408.6" x2="1008.8" y2="458.4" stroke="#ee7c5e" stroke-opacity="0.8" stroke-width="1.05"/>
<circle cx="1008.8" cy="458.4" r="4.6" fill="#1fc3d9" class="n"/>
<line x1="937.0" y1="235.2" x2="1001.7" y2="171.0" stroke="#ee7c5e" stroke-opacity="0.7" stroke-width="1.0"/>
<line x1="937.0" y1="235.2" x2="1015.9" y2="190.9" stroke="#ee7c5e" stroke-opacity="0.7" stroke-width="1.0"/>
<line x1="937.0" y1="235.2" x2="1017.9" y2="210.5" stroke="#ee7c5e" stroke-opacity="0.7" stroke-width="1.0"/>
<line x1="937.0" y1="235.2" x2="915.9" y2="320.4" stroke="#ee7c5e" stroke-opacity="0.7" stroke-width="1.0"/>
<line x1="937.0" y1="235.2" x2="934.1" y2="317.0" stroke="#ee7c5e" stroke-opacity="0.7" stroke-width="1.0"/>
<line x1="937.0" y1="235.2" x2="959.9" y2="309.8" stroke="#ee7c5e" stroke-opacity="0.7" stroke-width="1.0"/>
<circle cx="1001.7" cy="171.0" r="6.0" fill="#1fc3d9" class="n"/>
<circle cx="1015.9" cy="190.9" r="6.0" fill="#1fc3d9" class="n"/>
<circle cx="1017.9" cy="210.5" r="6.3" fill="#1fc3d9" class="n"/>
<circle cx="915.9" cy="320.4" r="6.0" fill="#1fc3d9" class="n"/>
<circle cx="934.1" cy="317.0" r="6.0" fill="#1fc3d9" class="n"/>
<circle cx="959.9" cy="309.8" r="6.0" fill="#1fc3d9" class="n"/>
<circle cx="937.0" cy="235.2" r="5.7" fill="#df2a2a"/>
<line x1="934.4" y1="524.2" x2="1001.2" y2="581.8" stroke="#ee7c5e" stroke-opacity="0.7" stroke-width="1.0"/>
<line x1="934.4" y1="524.2" x2="938.0" y2="437.0" stroke="#ee7c5e" stroke-opacity="0.7" stroke-width="1.0"/>
<line x1="934.4" y1="524.2" x2="1027.0" y2="519.5" stroke="#ee7c5e" stroke-opacity="0.7" stroke-width="1.0"/>
<line x1="934.4" y1="524.2" x2="1029.0" y2="529.0" stroke="#ee7c5e" stroke-opacity="0.7" stroke-width="1.0"/>
<circle cx="1001.2" cy="581.8" r="5.7" fill="#1fc3d9" class="n"/>
<circle cx="938.0" cy="437.0" r="5.5" fill="#1fc3d9" class="n"/>
<circle cx="1027.0" cy="519.5" r="6.3" fill="#1fc3d9" class="n"/>
<circle cx="1029.0" cy="529.0" r="6.3" fill="#1fc3d9" class="n"/>
<circle cx="934.4" cy="524.2" r="5.7" fill="#df2a2a"/>
<line x1="1276.4" y1="606.3" x2="1246.8" y2="563.4" stroke="#ee7c5e" stroke-opacity="0.7" stroke-width="1.0"/>
<circle cx="1246.8" cy="563.4" r="5.7" fill="#1fc3d9" class="n"/>
<circle cx="1276.4" cy="606.3" r="5.4" fill="#df2a2a"/>
<line x1="927.9" y1="120.5" x2="940.4" y2="85.6" stroke="#ee7c5e" stroke-opacity="0.7" stroke-width="1.0"/>
<line x1="927.9" y1="120.5" x2="919.9" y2="103.2" stroke="#ee7c5e" stroke-opacity="0.7" stroke-width="1.0"/>
<line x1="927.9" y1="120.5" x2="953.1" y2="98.6" stroke="#ee7c5e" stroke-opacity="0.7" stroke-width="1.0"/>
<line x1="927.9" y1="120.5" x2="986.1" y2="93.5" stroke="#ee7c5e" stroke-opacity="0.7" stroke-width="1.0"/>
<line x1="927.9" y1="120.5" x2="974.2" y2="103.2" stroke="#ee7c5e" stroke-opacity="0.7" stroke-width="1.0"/>
<line x1="927.9" y1="120.5" x2="942.6" y2="112.5" stroke="#ee7c5e" stroke-opacity="0.7" stroke-width="1.0"/>
<line x1="927.9" y1="120.5" x2="921.6" y2="116.2" stroke="#ee7c5e" stroke-opacity="0.7" stroke-width="1.0"/>
<line x1="927.9" y1="120.5" x2="925.6" y2="145.7" stroke="#ee7c5e" stroke-opacity="0.7" stroke-width="1.0"/>
<line x1="927.9" y1="120.5" x2="915.1" y2="153.1" stroke="#ee7c5e" stroke-opacity="0.7" stroke-width="1.0"/>
<circle cx="940.4" cy="85.6" r="5.0" fill="#1fc3d9" class="n"/>
<circle cx="919.9" cy="103.2" r="4.8" fill="#1fc3d9" class="n"/>
<circle cx="953.1" cy="98.6" r="4.8" fill="#1fc3d9" class="n"/>
<circle cx="986.1" cy="93.5" r="4.5" fill="#1fc3d9" class="n"/>
<circle cx="974.2" cy="103.2" r="4.8" fill="#1fc3d9" class="n"/>
<circle cx="942.6" cy="112.5" r="4.8" fill="#1fc3d9" class="n"/>
<circle cx="921.6" cy="116.2" r="4.8" fill="#1fc3d9" class="n"/>
<circle cx="925.6" cy="145.7" r="4.0" fill="#1fc3d9" class="n"/>
<circle cx="915.1" cy="153.1" r="4.0" fill="#1fc3d9" class="n"/>
<circle cx="927.9" cy="120.5" r="4.0" fill="#df2a2a"/>
<line x1="793.6" y1="176.4" x2="806.9" y2="158.5" stroke="#ee7c5e" stroke-opacity="0.7" stroke-width="1.0"/>
<line x1="793.6" y1="176.4" x2="823.7" y2="151.1" stroke="#ee7c5e" stroke-opacity="0.7" stroke-width="1.0"/>
<line x1="793.6" y1="176.4" x2="833.9" y2="145.2" stroke="#ee7c5e" stroke-opacity="0.7" stroke-width="1.0"/>
<line x1="793.6" y1="176.4" x2="854.6" y2="142.6" stroke="#ee7c5e" stroke-opacity="0.7" stroke-width="1.0"/>
<line x1="793.6" y1="176.4" x2="846.7" y2="153.7" stroke="#ee7c5e" stroke-opacity="0.7" stroke-width="1.0"/>
<line x1="793.6" y1="176.4" x2="848.9" y2="164.8" stroke="#ee7c5e" stroke-opacity="0.7" stroke-width="1.0"/>
<line x1="793.6" y1="176.4" x2="814.9" y2="173.6" stroke="#ee7c5e" stroke-opacity="0.7" stroke-width="1.0"/>
<line x1="793.6" y1="176.4" x2="826.2" y2="190.0" stroke="#ee7c5e" stroke-opacity="0.7" stroke-width="1.0"/>
<line x1="793.6" y1="176.4" x2="814.0" y2="198.3" stroke="#ee7c5e" stroke-opacity="0.7" stroke-width="1.0"/>
<line x1="793.6" y1="176.4" x2="788.7" y2="188.3" stroke="#ee7c5e" stroke-opacity="0.7" stroke-width="1.0"/>
<line x1="793.6" y1="176.4" x2="778.8" y2="199.7" stroke="#ee7c5e" stroke-opacity="0.7" stroke-width="1.0"/>
<line x1="793.6" y1="176.4" x2="797.3" y2="203.7" stroke="#ee7c5e" stroke-opacity="0.7" stroke-width="1.0"/>
<line x1="793.6" y1="176.4" x2="803.5" y2="212.2" stroke="#ee7c5e" stroke-opacity="0.7" stroke-width="1.0"/>
<line x1="793.6" y1="176.4" x2="761.2" y2="212.2" stroke="#ee7c5e" stroke-opacity="0.7" stroke-width="1.0"/>
<line x1="793.6" y1="176.4" x2="790.2" y2="221.3" stroke="#ee7c5e" stroke-opacity="0.7" stroke-width="1.0"/>
<line x1="793.6" y1="176.4" x2="770.3" y2="222.7" stroke="#ee7c5e" stroke-opacity="0.7" stroke-width="1.0"/>
<line x1="793.6" y1="176.4" x2="777.4" y2="226.7" stroke="#ee7c5e" stroke-opacity="0.7" stroke-width="1.0"/>
<line x1="793.6" y1="176.4" x2="753.3" y2="233.2" stroke="#ee7c5e" stroke-opacity="0.7" stroke-width="1.0"/>
<line x1="793.6" y1="176.4" x2="749.6" y2="236.3" stroke="#ee7c5e" stroke-opacity="0.7" stroke-width="1.0"/>
<line x1="793.6" y1="176.4" x2="760.1" y2="239.2" stroke="#ee7c5e" stroke-opacity="0.7" stroke-width="1.0"/>
<line x1="793.6" y1="176.4" x2="770.9" y2="242.0" stroke="#ee7c5e" stroke-opacity="0.7" stroke-width="1.0"/>
<line x1="793.6" y1="176.4" x2="797.8" y2="176.4" stroke="#ee7c5e" stroke-opacity="0.7" stroke-width="1.0"/>
<circle cx="793.6" cy="176.4" r="4.5" fill="#df2a2a"/>
<circle cx="806.9" cy="158.5" r="5.0" fill="#1fc3d9" class="n"/>
<circle cx="823.7" cy="151.1" r="5.0" fill="#1fc3d9" class="n"/>
<circle cx="833.9" cy="145.2" r="5.0" fill="#1fc3d9" class="n"/>
<circle cx="854.6" cy="142.6" r="4.5" fill="#1fc3d9" class="n"/>
<circle cx="846.7" cy="153.7" r="4.8" fill="#1fc3d9" class="n"/>
<circle cx="848.9" cy="164.8" r="4.2" fill="#1fc3d9" class="n"/>
<circle cx="814.9" cy="173.6" r="5.0" fill="#1fc3d9" class="n"/>
<circle cx="826.2" cy="190.0" r="4.2" fill="#1fc3d9" class="n"/>
<circle cx="814.0" cy="198.3" r="4.2" fill="#1fc3d9" class="n"/>
<circle cx="788.7" cy="188.3" r="5.0" fill="#1fc3d9" class="n"/>
<circle cx="778.8" cy="199.7" r="5.0" fill="#1fc3d9" class="n"/>
<circle cx="797.3" cy="203.7" r="4.4" fill="#1fc3d9" class="n"/>
<circle cx="803.5" cy="212.2" r="4.0" fill="#1fc3d9" class="n"/>
<circle cx="761.2" cy="212.2" r="4.8" fill="#1fc3d9" class="n"/>
<circle cx="790.2" cy="221.3" r="4.2" fill="#1fc3d9" class="n"/>
<circle cx="770.3" cy="222.7" r="4.6" fill="#1fc3d9" class="n"/>
<circle cx="777.4" cy="226.7" r="4.2" fill="#1fc3d9" class="n"/>
<circle cx="753.3" cy="233.2" r="4.6" fill="#1fc3d9" class="n"/>
<circle cx="749.6" cy="236.3" r="4.2" fill="#1fc3d9" class="n"/>
<circle cx="760.1" cy="239.2" r="4.4" fill="#1fc3d9" class="n"/>
<circle cx="770.9" cy="242.0" r="4.4" fill="#1fc3d9" class="n"/>
<circle cx="797.8" cy="176.4" r="5.2" fill="#1fc3d9" class="n"/>
<line x1="825.1" y1="199.7" x2="879.3" y2="240.6" stroke="#ee7c5e" stroke-opacity="0.7" stroke-width="1.0"/>
<circle cx="879.3" cy="240.6" r="5.7" fill="#1fc3d9" class="n"/>
<circle cx="825.1" cy="199.7" r="5.5" fill="#df2a2a"/>
<line x1="810.6" y1="355.0" x2="818.2" y2="299.3" stroke="#ee7c5e" stroke-opacity="0.7" stroke-width="1.0"/>
<line x1="810.6" y1="355.0" x2="834.4" y2="302.3" stroke="#ee7c5e" stroke-opacity="0.7" stroke-width="1.0"/>
<line x1="810.6" y1="355.0" x2="857.9" y2="359.5" stroke="#ee7c5e" stroke-opacity="0.7" stroke-width="1.0"/>
<circle cx="818.2" cy="299.3" r="3.8" fill="#1fc3d9" class="n"/>
<circle cx="834.4" cy="302.3" r="3.8" fill="#1fc3d9" class="n"/>
<circle cx="857.9" cy="359.5" r="3.8" fill="#1fc3d9" class="n"/>
<circle cx="810.6" cy="355.0" r="3.8" fill="#df2a2a"/>
<line x1="751.2" y1="338.7" x2="719.0" y2="309.9" stroke="#ee7c5e" stroke-opacity="0.6" stroke-width="0.95"/>
<line x1="751.2" y1="338.7" x2="736.8" y2="327.3" stroke="#ee7c5e" stroke-opacity="0.6" stroke-width="0.95"/>
<line x1="751.2" y1="338.7" x2="736.0" y2="354.2" stroke="#ee7c5e" stroke-opacity="0.6" stroke-width="0.95"/>
<line x1="751.2" y1="338.7" x2="705.4" y2="367.8" stroke="#ee7c5e" stroke-opacity="0.6" stroke-width="0.95"/>
<line x1="751.2" y1="338.7" x2="737.5" y2="387.1" stroke="#ee7c5e" stroke-opacity="0.6" stroke-width="0.95"/>
<line x1="751.2" y1="338.7" x2="795.5" y2="395.1" stroke="#ee7c5e" stroke-opacity="0.6" stroke-width="0.95"/>
<line x1="751.2" y1="338.7" x2="781.5" y2="409.5" stroke="#ee7c5e" stroke-opacity="0.6" stroke-width="0.95"/>
<line x1="751.2" y1="338.7" x2="747.8" y2="424.6" stroke="#ee7c5e" stroke-opacity="0.6" stroke-width="0.95"/>
<line x1="751.2" y1="338.7" x2="729.6" y2="421.6" stroke="#ee7c5e" stroke-opacity="0.6" stroke-width="0.95"/>
<line x1="751.2" y1="338.7" x2="710.3" y2="406.8" stroke="#ee7c5e" stroke-opacity="0.6" stroke-width="0.95"/>
<line x1="751.2" y1="338.7" x2="720.9" y2="450.7" stroke="#ee7c5e" stroke-opacity="0.6" stroke-width="0.95"/>
<line x1="751.2" y1="338.7" x2="729.2" y2="455.6" stroke="#ee7c5e" stroke-opacity="0.6" stroke-width="0.95"/>
<line x1="751.2" y1="338.7" x2="726.2" y2="471.2" stroke="#ee7c5e" stroke-opacity="0.6" stroke-width="0.95"/>
<line x1="705.4" y1="367.8" x2="717.1" y2="305.0" stroke="#ee7c5e" stroke-opacity="0.6" stroke-width="0.95"/>
<line x1="705.4" y1="367.8" x2="697.0" y2="342.8" stroke="#ee7c5e" stroke-opacity="0.6" stroke-width="0.95"/>
<line x1="705.4" y1="367.8" x2="736.8" y2="327.3" stroke="#ee7c5e" stroke-opacity="0.6" stroke-width="0.95"/>
<line x1="705.4" y1="367.8" x2="736.0" y2="354.2" stroke="#ee7c5e" stroke-opacity="0.6" stroke-width="0.95"/>
<line x1="705.4" y1="367.8" x2="737.5" y2="387.1" stroke="#ee7c5e" stroke-opacity="0.6" stroke-width="0.95"/>
<line x1="705.4" y1="367.8" x2="710.3" y2="406.8" stroke="#ee7c5e" stroke-opacity="0.6" stroke-width="0.95"/>
<line x1="705.4" y1="367.8" x2="705.0" y2="409.8" stroke="#ee7c5e" stroke-opacity="0.6" stroke-width="0.95"/>
<line x1="705.4" y1="367.8" x2="696.3" y2="420.8" stroke="#ee7c5e" stroke-opacity="0.6" stroke-width="0.95"/>
<line x1="705.4" y1="367.8" x2="703.8" y2="427.3" stroke="#ee7c5e" stroke-opacity="0.6" stroke-width="0.95"/>
<line x1="705.4" y1="367.8" x2="696.7" y2="434.4" stroke="#ee7c5e" stroke-opacity="0.6" stroke-width="0.95"/>
<line x1="705.4" y1="367.8" x2="710.3" y2="433.7" stroke="#ee7c5e" stroke-opacity="0.6" stroke-width="0.95"/>
<line x1="705.4" y1="367.8" x2="718.2" y2="435.6" stroke="#ee7c5e" stroke-opacity="0.6" stroke-width="0.95"/>
<line x1="705.4" y1="367.8" x2="762.9" y2="520.0" stroke="#ee7c5e" stroke-opacity="0.6" stroke-width="0.95"/>
<line x1="722.8" y1="391.7" x2="757.2" y2="394.3" stroke="#ee7c5e" stroke-opacity="0.6" stroke-width="0.95"/>
<line x1="722.8" y1="391.7" x2="710.3" y2="406.8" stroke="#ee7c5e" stroke-opacity="0.6" stroke-width="0.95"/>
<line x1="722.8" y1="391.7" x2="729.2" y2="455.6" stroke="#ee7c5e" stroke-opacity="0.6" stroke-width="0.95"/>
<line x1="722.8" y1="391.7" x2="732.6" y2="475.7" stroke="#ee7c5e" stroke-opacity="0.6" stroke-width="0.95"/>
<line x1="722.8" y1="391.7" x2="736.8" y2="465.1" stroke="#ee7c5e" stroke-opacity="0.6" stroke-width="0.95"/>
<line x1="722.8" y1="391.7" x2="726.2" y2="471.2" stroke="#ee7c5e" stroke-opacity="0.6" stroke-width="0.95"/>
<line x1="746.2" y1="447.3" x2="784.1" y2="433.7" stroke="#ee7c5e" stroke-opacity="0.6" stroke-width="0.95"/>
<line x1="746.2" y1="447.3" x2="754.6" y2="433.7" stroke="#ee7c5e" stroke-opacity="0.6" stroke-width="0.95"/>
<line x1="746.2" y1="447.3" x2="768.2" y2="394.3" stroke="#ee7c5e" stroke-opacity="0.6" stroke-width="0.95"/>
<line x1="746.2" y1="447.3" x2="772.7" y2="497.7" stroke="#ee7c5e" stroke-opacity="0.6" stroke-width="0.95"/>
<line x1="762.9" y1="520.0" x2="781.5" y2="450.0" stroke="#ee7c5e" stroke-opacity="0.6" stroke-width="0.95"/>
<line x1="762.9" y1="520.0" x2="789.8" y2="460.2" stroke="#ee7c5e" stroke-opacity="0.6" stroke-width="0.95"/>
<line x1="762.9" y1="520.0" x2="788.6" y2="490.1" stroke="#ee7c5e" stroke-opacity="0.6" stroke-width="0.95"/>
<line x1="762.9" y1="520.0" x2="772.7" y2="497.7" stroke="#ee7c5e" stroke-opacity="0.6" stroke-width="0.95"/>
<line x1="762.9" y1="520.0" x2="801.5" y2="503.7" stroke="#ee7c5e" stroke-opacity="0.6" stroke-width="0.95"/>
<line x1="762.9" y1="520.0" x2="745.9" y2="499.2" stroke="#ee7c5e" stroke-opacity="0.6" stroke-width="0.95"/>
<line x1="762.9" y1="520.0" x2="782.2" y2="532.9" stroke="#ee7c5e" stroke-opacity="0.6" stroke-width="0.95"/>
<line x1="762.9" y1="520.0" x2="803.8" y2="537.0" stroke="#ee7c5e" stroke-opacity="0.6" stroke-width="0.95"/>
<line x1="762.9" y1="520.0" x2="739.8" y2="470.0" stroke="#ee7c5e" stroke-opacity="0.6" stroke-width="0.95"/>
<line x1="762.9" y1="520.0" x2="726.2" y2="471.2" stroke="#ee7c5e" stroke-opacity="0.6" stroke-width="0.95"/>
<line x1="762.9" y1="520.0" x2="720.9" y2="450.7" stroke="#ee7c5e" stroke-opacity="0.6" stroke-width="0.95"/>
<line x1="762.9" y1="520.0" x2="736.4" y2="443.5" stroke="#ee7c5e" stroke-opacity="0.6" stroke-width="0.95"/>
<line x1="762.9" y1="520.0" x2="754.6" y2="433.7" stroke="#ee7c5e" stroke-opacity="0.6" stroke-width="0.95"/>
<line x1="762.9" y1="520.0" x2="736.8" y2="465.1" stroke="#ee7c5e" stroke-opacity="0.6" stroke-width="0.95"/>
<line x1="762.9" y1="520.0" x2="732.6" y2="475.7" stroke="#ee7c5e" stroke-opacity="0.6" stroke-width="0.95"/>
<line x1="805.7" y1="511.3" x2="782.2" y2="532.9" stroke="#ee7c5e" stroke-opacity="0.6" stroke-width="0.95"/>
<line x1="805.7" y1="511.3" x2="803.8" y2="537.0" stroke="#ee7c5e" stroke-opacity="0.6" stroke-width="0.95"/>
<line x1="805.7" y1="511.3" x2="786.0" y2="542.0" stroke="#ee7c5e" stroke-opacity="0.6" stroke-width="0.95"/>
<line x1="805.7" y1="511.3" x2="803.4" y2="559.7" stroke="#ee7c5e" stroke-opacity="0.6" stroke-width="0.95"/>
<line x1="805.7" y1="511.3" x2="801.5" y2="503.7" stroke="#ee7c5e" stroke-opacity="0.6" stroke-width="0.95"/>
<line x1="722.8" y1="391.7" x2="762.9" y2="520.0" stroke="#ee7c5e" stroke-opacity="0.6" stroke-width="0.95"/>
<line x1="805.7" y1="511.3" x2="762.9" y2="520.0" stroke="#ee7c5e" stroke-opacity="0.6" stroke-width="0.95"/>
<circle cx="705.4" cy="367.8" r="4.0" fill="#df2a2a"/>
<circle cx="717.1" cy="305.0" r="4.2" fill="#1fc3d9" class="n"/>
<circle cx="719.0" cy="309.9" r="5.0" fill="#1fc3d9" class="n"/>
<circle cx="736.8" cy="327.3" r="4.2" fill="#1fc3d9" class="n"/>
<circle cx="697.0" cy="342.8" r="4.5" fill="#1fc3d9" class="n"/>
<circle cx="736.0" cy="354.2" r="4.0" fill="#1fc3d9" class="n"/>
<circle cx="705.4" cy="367.8" r="5.3" fill="#1fc3d9" class="n"/>
<circle cx="737.5" cy="387.1" r="4.2" fill="#1fc3d9" class="n"/>
<circle cx="757.2" cy="394.3" r="5.3" fill="#1fc3d9" class="n"/>
<circle cx="768.2" cy="394.3" r="3.8" fill="#1fc3d9" class="n"/>
<circle cx="795.5" cy="395.1" r="6.0" fill="#1fc3d9" class="n"/>
<circle cx="781.5" cy="409.5" r="5.8" fill="#1fc3d9" class="n"/>
<circle cx="710.3" cy="406.8" r="5.0" fill="#1fc3d9" class="n"/>
<circle cx="705.0" cy="409.8" r="5.0" fill="#1fc3d9" class="n"/>
<circle cx="696.3" cy="420.8" r="4.5" fill="#1fc3d9" class="n"/>
<circle cx="703.8" cy="427.3" r="4.3" fill="#1fc3d9" class="n"/>
<circle cx="696.7" cy="434.4" r="4.3" fill="#1fc3d9" class="n"/>
<circle cx="710.3" cy="433.7" r="4.4" fill="#1fc3d9" class="n"/>
<circle cx="718.2" cy="435.6" r="4.2" fill="#1fc3d9" class="n"/>
<circle cx="729.6" cy="421.6" r="5.5" fill="#1fc3d9" class="n"/>
<circle cx="726.2" cy="426.1" r="4.0" fill="#1fc3d9" class="n"/>
<circle cx="747.8" cy="424.6" r="5.5" fill="#1fc3d9" class="n"/>
<circle cx="754.6" cy="433.7" r="5.2" fill="#1fc3d9" class="n"/>
<circle cx="784.1" cy="433.7" r="3.8" fill="#1fc3d9" class="n"/>
<circle cx="736.4" cy="443.5" r="5.0" fill="#1fc3d9" class="n"/>
<circle cx="720.9" cy="450.7" r="4.4" fill="#1fc3d9" class="n"/>
<circle cx="729.2" cy="455.6" r="4.6" fill="#1fc3d9" class="n"/>
<circle cx="781.5" cy="450.0" r="5.3" fill="#1fc3d9" class="n"/>
<circle cx="789.8" cy="460.2" r="5.3" fill="#1fc3d9" class="n"/>
<circle cx="736.8" cy="465.1" r="4.8" fill="#1fc3d9" class="n"/>
<circle cx="739.8" cy="470.0" r="4.4" fill="#1fc3d9" class="n"/>
<circle cx="726.2" cy="471.2" r="4.6" fill="#1fc3d9" class="n"/>
<circle cx="732.6" cy="475.7" r="5.0" fill="#1fc3d9" class="n"/>
<circle cx="788.6" cy="490.1" r="5.5" fill="#1fc3d9" class="n"/>
<circle cx="772.7" cy="497.7" r="4.2" fill="#1fc3d9" class="n"/>
<circle cx="745.9" cy="499.2" r="4.6" fill="#1fc3d9" class="n"/>
<circle cx="801.5" cy="503.7" r="5.6" fill="#1fc3d9" class="n"/>
<circle cx="782.2" cy="532.9" r="4.2" fill="#1fc3d9" class="n"/>
<circle cx="803.8" cy="537.0" r="5.6" fill="#1fc3d9" class="n"/>
<circle cx="786.0" cy="542.0" r="4.2" fill="#1fc3d9" class="n"/>
<circle cx="803.4" cy="559.7" r="4.4" fill="#1fc3d9" class="n"/>
<circle cx="751.2" cy="338.7" r="5.6" fill="#df2a2a"/>
<circle cx="722.8" cy="391.7" r="4.6" fill="#df2a2a"/>
<circle cx="746.2" cy="447.3" r="4.0" fill="#df2a2a"/>
<circle cx="762.9" cy="520.0" r="5.0" fill="#df2a2a"/>
<circle cx="805.7" cy="511.3" r="3.8" fill="#df2a2a"/>
</svg>
<div class="b" style="left:0px;top:0px;width:37px;height:845px;background:#141414;"></div>
<div class="b" style="left:37px;top:0px;width:639px;height:845px;background:#2b2b2b;"></div>
<div class="b" style="left:0px;top:0px;width:1320px;height:1px;background:rgba(255,255,255,0.075);"></div>
<div class="b" style="left:0px;top:844px;width:1320px;height:1px;background:rgba(255,255,255,0.075);"></div>
<div class="b" style="left:1319px;top:0px;width:1px;height:845px;background:rgba(255,255,255,0.06);"></div>
<div class="b" style="left:47px;top:17.5px;width:394px;height:30px;background:#2d2d2d;border:1px solid #474747;border-radius:16px;box-sizing:border-box;"></div>
<div class="b" style="left:541.5px;top:22.6px;width:252px;height:28px;background:rgba(0,0,0,0.8);border-radius:14px;"></div>
<div class="b" style="left:37px;top:114px;width:639px;height:2px;background:#5e5e5e;"></div>
<div class="b" style="left:104.2px;top:79.8px;width:73.3px;height:36.2px;background:#454545;border:1px solid #6a6a6a;border-bottom:none;border-radius:5px 5px 0 0;box-sizing:border-box;"></div>
<div class="b" style="left:671px;top:144px;width:5px;height:701px;background:#313131;"></div>
<div class="b" style="left:671.3px;top:239px;width:4.4px;height:594px;background:#454545;border-radius:2px;"></div>
<div class="b" style="left:74px;top:143px;width:561px;height:1px;background:#333333;"></div>
<div class="b" style="left:74px;top:145px;width:561px;height:1px;background:#272727;"></div>
<div class="b" style="left:74px;top:146px;width:561px;height:58px;background:#313131;"></div>
<div class="b" style="left:74px;top:204px;width:561px;height:1px;background:#272727;"></div>
<div class="b" style="left:213px;top:145.5px;width:1px;height:58.5px;background:#292929;"></div>
<div class="b" style="left:423.5px;top:145.5px;width:1px;height:58.5px;background:#292929;"></div>
<div class="b" style="left:225px;top:156.8px;width:187.2px;height:35.4px;background:#1d1d1d;border-radius:4px;"></div>
<div class="b" style="left:436px;top:156.8px;width:187.4px;height:35.4px;background:#1d1d1d;border-radius:4px;"></div>
<div class="b" style="left:369.3px;top:228px;width:264.5px;height:36px;background:#444;border-radius:3px;"></div>
<div class="b" style="left:599.2px;top:236.5px;width:1.3px;height:19.5px;background:#d0d0d0;"></div>
<div class="b" style="left:368.4px;top:272.6px;width:79.4px;height:30.6px;background:#454545;border-radius:16px;"></div>
<div class="b" style="left:74px;top:330px;width:561px;height:127px;background:#313131;"></div>
<div class="b" style="left:74px;top:330px;width:561px;height:2px;background:#3a3a3a;"></div>
<div class="b" style="left:186.0px;top:332px;width:1px;height:125px;background:#292929;"></div>
<div class="b" style="left:299.0px;top:332px;width:1px;height:125px;background:#292929;"></div>
<div class="b" style="left:411.8px;top:332px;width:1px;height:125px;background:#292929;"></div>
<div class="b" style="left:524.4px;top:332px;width:1px;height:125px;background:#292929;"></div>
<div class="b" style="left:74px;top:393.2px;width:561px;height:1px;background:#292929;"></div>
<div class="b" style="left:74px;top:457.2px;width:548.5px;height:4.6px;background:#454545;border-radius:2.5px;"></div>
<div class="b" style="left:629.6px;top:332px;width:5.2px;height:22px;background:#555;border-radius:2.5px;"></div>
<div class="b" style="left:74px;top:484px;width:561px;height:103px;background:#313131;"></div>
<div class="b" style="left:74px;top:484px;width:561px;height:2px;background:#3a3a3a;"></div>
<div class="b" style="left:217.4px;top:486px;width:1px;height:101px;background:#292929;"></div>
<div class="b" style="left:378.2px;top:486px;width:1px;height:101px;background:#292929;"></div>
<div class="b" style="left:506.2px;top:486px;width:1px;height:101px;background:#292929;"></div>
<div class="b" style="left:74px;top:527.8px;width:561px;height:1px;background:#292929;"></div>
<div class="b" style="left:229.5px;top:540px;width:137px;height:35.2px;background:#1d1d1d;border-radius:4px;"></div>
<div class="b" style="left:518.4px;top:549.4px;width:13.2px;height:13.2px;background:transparent;border:1.5px solid #b4b4b4;border-radius:3.5px;box-sizing:border-box;"></div>
<div class="b" style="left:390.3px;top:550.2px;width:13.2px;height:13.2px;background:transparent;border:1.5px solid #b4b4b4;border-radius:3.5px;box-sizing:border-box;"></div>
<div class="b" style="left:74.3px;top:618.6px;width:13.2px;height:13.2px;background:transparent;border:1.5px solid #b4b4b4;border-radius:3.5px;box-sizing:border-box;"></div>
<div class="b" style="left:74.3px;top:651.7px;width:13.2px;height:13.2px;background:transparent;border:1.5px solid #b4b4b4;border-radius:3.5px;box-sizing:border-box;"></div>
<div class="b" style="left:74.2px;top:703.4px;width:48.4px;height:30.4px;background:#454545;border-radius:16px;"></div>
<div class="b" style="left:644px;top:749px;width:4.6px;height:76px;background:#303030;border-radius:2px;"></div>
<div class="b" style="left:644px;top:795px;width:4.6px;height:28.5px;background:#474747;border-radius:2px;"></div>
<div class="b" style="left:926px;top:18px;width:376.5px;height:30px;background:#2d2d2d;border-radius:15px;"></div>
<div class="b" style="left:926px;top:18px;width:94.5px;height:30px;background:#8fd3f9;border-radius:15px 0 0 15px;"></div>
<div class="b" style="left:1209px;top:18px;width:93.5px;height:30px;background:#8fd3f9;border-radius:0 15px 15px 0;"></div>
<div class="b" style="left:1114.5px;top:18px;width:1px;height:30px;background:#333;"></div>
<div class="b" style="left:1144px;top:75px;width:132px;height:25px;background:transparent;border:1.2px solid #1fc3d9;border-radius:13px;box-sizing:border-box;"></div>
<div class="b" style="left:1176px;top:109px;width:100px;height:25px;background:transparent;border:1.2px solid #e22b2b;border-radius:13px;box-sizing:border-box;"></div>
<div class="b" style="left:1122px;top:150.2px;width:154px;height:25px;background:transparent;border:1.2px solid #f08565;border-radius:13px;box-sizing:border-box;"></div>
<div class="b" style="left:1285.2px;top:79px;width:16.8px;height:16.8px;background:#1fc3d9;border-radius:50%;"></div>
<div class="b" style="left:1285.2px;top:112.7px;width:16.8px;height:16.8px;background:#e22b2b;border-radius:50%;"></div>
<div class="b" style="left:1285px;top:158.6px;width:17.2px;height:5.2px;background:#f08565;"></div>
<svg width="1320" height="845" viewBox="0 0 1320 845" style="left:0;top:0">
<rect x="9" y="25.0" width="16.6" height="2.7" rx="1.2" fill="#dcdcdc"/>
<rect x="9" y="30.7" width="16.6" height="2.7" rx="1.2" fill="#dcdcdc"/>
<rect x="9" y="36.4" width="16.6" height="2.7" rx="1.2" fill="#dcdcdc"/>
<path d="M12.4 69.5 H21.6 V75.6 Q21.6 76.6 22.6 76.6 H27.7 V87.4 Q27.7 88.8 26.3 88.8 H12.4 Q11.1 88.8 11.1 87.4 V70.9 Q11.1 69.5 12.4 69.5 Z M23 69.8 L27.5 75.2 H23 Z" fill="#bcbcbc"/>
<path d="M15.2 117.3 L10.3 122.3 L15.2 127.3 M23.6 117.3 L28.5 122.3 L23.6 127.3 M21 115.3 L17.6 129.3" fill="none" stroke="#bcbcbc" stroke-width="1.9" stroke-linecap="round" stroke-linejoin="round"/>
<path d="M9.6 159.7 H24 V156.9 L29.4 161 L24 165.1 V162.4 H9.6 Z M29.4 166.9 H15 V164.2 L9.6 168.3 L15 172.4 V169.6 H29.4 Z" fill="#ffffff"/>
<rect x="10.4" y="197.8" width="17.9" height="15.1" rx="2" fill="#bcbcbc"/>
<rect x="12.0" y="200.0" width="4.1" height="3.0" fill="#141414"/>
<rect x="12.0" y="204.5" width="4.1" height="2.7" fill="#141414"/>
<rect x="12.0" y="208.8" width="4.1" height="2.6" fill="#141414"/>
<rect x="17.5" y="200.0" width="3.5" height="3.0" fill="#141414"/>
<rect x="17.5" y="204.5" width="3.5" height="2.7" fill="#141414"/>
<rect x="17.5" y="208.8" width="3.5" height="2.6" fill="#141414"/>
<rect x="22.4" y="200.0" width="4.3" height="3.0" fill="#141414"/>
<rect x="22.4" y="204.5" width="4.3" height="2.7" fill="#141414"/>
<rect x="22.4" y="208.8" width="4.3" height="2.6" fill="#141414"/>
<path d="M19.4 244 V247.8 M12.6 251.5 V247.8 H26.5 V251.5 M19.4 247.8 V251.5" fill="none" stroke="#bcbcbc" stroke-width="1.4"/>
<rect x="16.9" y="240.1" width="5" height="5.2" rx="1" fill="#bcbcbc"/>
<rect x="10.2" y="251.2" width="5" height="5.2" rx="1" fill="#bcbcbc"/>
<rect x="16.9" y="251.2" width="5" height="5.2" rx="1" fill="#bcbcbc"/>
<rect x="24.1" y="251.2" width="5" height="5.2" rx="1" fill="#bcbcbc"/>
<path d="M12.6 283.1 H26.7 Q27.8 283.3 27 284.4 L21 291 V298 Q20.9 299 20 298.3 L17.9 296.6 V291 L12.2 284.4 Q11.5 283.3 12.6 283.1 Z" fill="#bcbcbc"/>
<path d="M19.6 325.6 L12.3 337.3 H26.6 Z M16.1 331.4 H23.3 L19.6 337.3 Z" fill="none" stroke="#bcbcbc" stroke-width="1.2" stroke-linejoin="round"/>
<circle cx="19.6" cy="325.6" r="1.3" fill="#141414" stroke="#bcbcbc" stroke-width="1.0"/>
<circle cx="12.3" cy="337.3" r="1.3" fill="#141414" stroke="#bcbcbc" stroke-width="1.0"/>
<circle cx="26.6" cy="337.3" r="1.3" fill="#141414" stroke="#bcbcbc" stroke-width="1.0"/>
<circle cx="16.1" cy="331.4" r="1.3" fill="#141414" stroke="#bcbcbc" stroke-width="1.0"/>
<circle cx="23.3" cy="331.4" r="1.3" fill="#141414" stroke="#bcbcbc" stroke-width="1.0"/>
<circle cx="19.6" cy="337.3" r="1.3" fill="#141414" stroke="#bcbcbc" stroke-width="1.0"/>
<circle cx="19.5" cy="374.9" r="8.6" fill="#bcbcbc"/>
<path d="M15.6 369.6 Q17.6 367.4 19.6 368.9 Q21 367.6 22.6 368.6 Q22.4 371 20.7 372.4 Q20.2 374.2 21.8 376.2 Q23.6 377.4 22.4 378.8 Q20.6 378.6 19.4 376.4 Q16.8 374.6 16.4 372.4 Q15 371 15.6 369.6 Z" fill="#141414"/>
<path d="M22.4 379.6 Q24.4 379.2 25.2 380.6 Q23.6 381.8 22.4 379.6 Z" fill="#141414"/>
<path d="M15.6 682.3 H11.6 Q9.7 682.3 9.7 684.2 V693 Q9.7 694.9 11.6 694.9 H15.6" fill="none" stroke="#d2d2d2" stroke-width="1.9" stroke-linecap="round"/>
<path d="M14 685.6 H20.3 V681.6 L27.6 688.6 L20.3 695.6 V691.6 H14 Z" fill="#d2d2d2"/>
<path d="M19 723.8 L27.9 731.4 L26.9 732.6 L19 725.9 L11.1 732.6 L10.1 731.4 Z" fill="#d2d2d2"/>
<path d="M19 727.2 L25.4 732.6 V737.7 H20.9 V733.7 H17.1 V737.7 H12.6 V732.6 Z M23.4 725 H25.5 V729.2 L23.4 727.4 Z" fill="#d2d2d2"/>
<rect x="8.9" y="763" width="19.6" height="19.6" fill="#c4c4c4"/>
<g fill="none" stroke="#161616" stroke-width="1.5"><rect x="16.7" y="770.7" width="3.8" height="3.8"/><circle cx="14.9" cy="768.9" r="1.8"/><circle cx="22.3" cy="768.9" r="1.8"/><circle cx="14.9" cy="776.3" r="1.8"/><circle cx="22.3" cy="776.3" r="1.8"/></g>
<circle cx="17" cy="817" r="11.6" fill="#4b3f9f"/>
<path d="M4.5 824 Q14 813.8 21.8 814.4 M21.8 814.4 Q16.5 809.5 17.6 804.8 M21.8 814.4 Q26.8 818.5 27.2 825.5" fill="none" stroke="#141414" stroke-width="2"/>
<circle cx="21.8" cy="814.4" r="2.2" fill="#141414"/>
<path d="M0 845 V838 Q0.5 844.5 7 845 Z" fill="#e8e8e8"/>
<circle cx="425" cy="33" r="5.6" fill="#c2c2c2"/>
<path d="M422.8 30.8 L427.2 35.2 M427.2 30.8 L422.8 35.2" stroke="#2b2b2b" stroke-width="1.5" stroke-linecap="round"/>
<g fill="#b4b4b4"><ellipse cx="462.6" cy="28" rx="7" ry="3"/><path d="M455.6 30 Q462.6 34 469.6 30 V32.6 Q462.6 36.8 455.6 32.6 Z"/><path d="M455.6 34 Q462.6 38 469.6 34 V36.6 Q462.6 40.8 455.6 36.6 Z"/><path d="M455.6 38 Q462.6 42 469.6 38 V38.9 Q462.6 43.4 455.6 38.9 Z"/></g>
<path d="M494.37 31.60 L494.37 34.40 L492.30 35.08 L492.25 35.21 L493.23 37.15 L491.25 39.13 L489.31 38.15 L489.18 38.20 L488.50 40.27 L485.70 40.27 L485.02 38.20 L484.89 38.15 L482.95 39.13 L480.97 37.15 L481.95 35.21 L481.90 35.08 L479.83 34.40 L479.83 31.60 L481.90 30.92 L481.95 30.79 L480.97 28.85 L482.95 26.87 L484.89 27.85 L485.02 27.80 L485.70 25.73 L488.50 25.73 L489.18 27.80 L489.31 27.85 L491.25 26.87 L493.23 28.85 L492.25 30.79 L492.30 30.92 Z M489.5 33 A2.4 2.4 0 1 0 484.70000000000005 33 A2.4 2.4 0 1 0 489.5 33 Z" fill="#b4b4b4" fill-rule="evenodd"/>
<path d="M762 35 L767.9 40.6 L773.8 35" fill="none" stroke="#cfcfcf" stroke-width="1.4" stroke-linecap="round" stroke-linejoin="round"/>
<rect x="608.2" y="71.4" width="13.6" height="4.4" rx="1.6" fill="#c9c9c9"/>
<path d="M631 64.4 H643.8 V75.8 H631 Z M632.6 68.6 V74.2 H642.2 V68.6 Z" fill="#c9c9c9" fill-rule="evenodd"/>
<path d="M653.3 64.4 H666.7 V75.8 H653.3 Z M654.9 66 V74.2 H665.1 V66 Z" fill="#c9c9c9" fill-rule="evenodd"/>
<path d="M657.6 67.7 L662.4 72.5 M662.4 67.7 L657.6 72.5" stroke="#c9c9c9" stroke-width="1.9"/>
<path d="M612 244 L616.6 248.6 L621.2 244" fill="none" stroke="#ffffff" stroke-width="2.1" stroke-linecap="round" stroke-linejoin="round"/>
<circle cx="90.7" cy="353.3" r="5.9" fill="#f2f2f2"/><path d="M87.4 353.3 H94.0" stroke="#313131" stroke-width="2.1"/><path d="M90.7 350.0 V356.6" stroke="#313131" stroke-width="2.1"/>
<circle cx="203.8" cy="353.3" r="5.9" fill="#f2f2f2"/><path d="M200.5 353.3 H207.10000000000002" stroke="#313131" stroke-width="2.1"/><path d="M203.8 350.0 V356.6" stroke="#313131" stroke-width="2.1"/>
<circle cx="316.4" cy="353.3" r="5.9" fill="#f2f2f2"/><path d="M313.09999999999997 353.3 H319.7" stroke="#313131" stroke-width="2.1"/>
<circle cx="429.4" cy="353.3" r="5.9" fill="#f2f2f2"/><path d="M426.09999999999997 353.3 H432.7" stroke="#313131" stroke-width="2.1"/><path d="M429.4 350.0 V356.6" stroke="#313131" stroke-width="2.1"/>
<circle cx="541.9" cy="353.3" r="5.9" fill="#f2f2f2"/><path d="M538.6 353.3 H545.1999999999999" stroke="#313131" stroke-width="2.1"/><path d="M541.9 350.0 V356.6" stroke="#313131" stroke-width="2.1"/>
<path d="M86 553.9 H95.2 V554.9 H86 Z M89 552.6 H92.2 V553.9 H89 Z M86.6 555.6 H94.6 L94.1 563.2 Q94 564 93.2 564 H88 Q87.2 564 87.1 563.2 Z" fill="#bdbdbd"/>
<path d="M88.9 557 V562.4 M90.6 557 V562.4 M92.3 557 V562.4" stroke="#313131" stroke-width="0.7"/>
<path d="M393 555.6 L396.6 559.4 L404.6 550.4" fill="none" stroke="#c8c8c8" stroke-width="2.4" stroke-linecap="round" stroke-linejoin="round"/>
<rect x="680.80" y="804.00" width="2.2" height="2.2" fill="#e6e6e6"/>
<rect x="680.80" y="808.18" width="2.2" height="2.2" fill="#e6e6e6"/>
<rect x="680.80" y="812.35" width="2.2" height="2.2" fill="#e6e6e6"/>
<rect x="680.80" y="816.53" width="2.2" height="2.2" fill="#e6e6e6"/>
<rect x="680.80" y="820.70" width="2.2" height="2.2" fill="#e6e6e6"/>
<rect x="684.98" y="804.00" width="2.2" height="2.2" fill="#e6e6e6"/>
<rect x="684.98" y="820.70" width="2.2" height="2.2" fill="#e6e6e6"/>
<rect x="689.15" y="804.00" width="2.2" height="2.2" fill="#e6e6e6"/>
<rect x="689.15" y="820.70" width="2.2" height="2.2" fill="#e6e6e6"/>
<rect x="693.33" y="804.00" width="2.2" height="2.2" fill="#e6e6e6"/>
<rect x="693.33" y="820.70" width="2.2" height="2.2" fill="#e6e6e6"/>
<rect x="697.50" y="804.00" width="2.2" height="2.2" fill="#e6e6e6"/>
<rect x="697.50" y="808.18" width="2.2" height="2.2" fill="#e6e6e6"/>
<rect x="697.50" y="812.35" width="2.2" height="2.2" fill="#e6e6e6"/>
<rect x="697.50" y="816.53" width="2.2" height="2.2" fill="#e6e6e6"/>
<rect x="697.50" y="820.70" width="2.2" height="2.2" fill="#e6e6e6"/>
<rect x="686.2" y="809.3" width="8.2" height="8.2" fill="none" stroke="#e6e6e6" stroke-width="1.6"/>
<path d="M721.6 807.8 H725.6 L727 806.2 H734.6 L736 807.8 H738.3 V820.2 H721.6 Z" fill="none" stroke="#c4c4c4" stroke-width="1.5" stroke-linejoin="round"/>
<circle cx="730.7" cy="813.6" r="4.1" fill="none" stroke="#c4c4c4" stroke-width="1.1"/><circle cx="730.7" cy="813.6" r="2.1" fill="none" stroke="#c4c4c4" stroke-width="1.0"/>
<rect x="722.8" y="808.6" width="2.4" height="1.2" fill="#c4c4c4"/>
<circle cx="769.5" cy="813.2" r="7.2" fill="none" stroke="#dedede" stroke-width="1.5"/><circle cx="769.5" cy="813.2" r="3.1" fill="none" stroke="#dedede" stroke-width="1.4"/>
<path d="M769.5 802.8 V808.6 M769.5 817.8 V823.6 M759.1 813.2 H764.9 M774.1 813.2 H779.9" stroke="#dedede" stroke-width="1.4"/>
<path d="M801.9 811.4 V807.1 Q801.9 805.9 803.1 805.9 H807.6 M811.2 805.9 H815.7 Q816.9 805.9 816.9 807.1 V811.4 M816.9 815 V819.4 Q816.9 820.6 815.7 820.6 H811.2 M807.6 820.6 H803.1 Q801.9 820.6 801.9 819.4 V815" fill="none" stroke="#c4c4c4" stroke-width="1.4"/>
<path d="M806.6 811.2 L812.6 809.6 L809.4 817 L808.6 812.8 Z" fill="none" stroke="#8a8a8a" stroke-width="0.9" stroke-linejoin="round"/>
<rect x="841.5" y="805.8" width="15.2" height="14.6" rx="1" fill="none" stroke="#c4c4c4" stroke-width="1.3"/>
<circle cx="846.9" cy="810.9" r="1.9" fill="#c4c4c4"/><circle cx="852.2" cy="810.1" r="1.1" fill="#c4c4c4"/>
<path d="M849.2 818 L852.2 815" stroke="#c4c4c4" stroke-width="3.2" stroke-linecap="round"/>
<path d="M882.2 811 V808 Q882.2 806.4 883.8 806.4 H884.5 M889.5 806.4 H894.4 Q896 806.4 896 808 V810.4 M896 816.4 V818.8 Q896 820.4 894.4 820.4 H893 M886.6 820.4 H883.8 Q882.2 820.4 882.2 818.8 V818" fill="none" stroke="#c4c4c4" stroke-width="1.3"/>
<circle cx="886.6" cy="806.5" r="2.1" fill="#c4c4c4"/><circle cx="881.4" cy="815.2" r="2.2" fill="#c4c4c4"/><circle cx="890.3" cy="816" r="2.4" fill="#c4c4c4"/><circle cx="892.2" cy="810.6" r="1.2" fill="#c4c4c4"/>
<path d="M913 809.6 H925.3 V821.8 H913 Z M917.6 804.2 H930 V816.4 H917.6 Z M913 809.6 L917.6 804.2 M925.3 809.6 L930 804.2 M925.3 821.8 L930 816.4 M913 821.8 L917.6 816.4" fill="none" stroke="#c4c4c4" stroke-width="1.3" stroke-linejoin="round"/>
<circle cx="913" cy="809.6" r="1.2" fill="#c4c4c4"/>
<circle cx="925.3" cy="809.6" r="1.2" fill="#c4c4c4"/>
<circle cx="913" cy="821.8" r="1.2" fill="#c4c4c4"/>
<circle cx="925.3" cy="821.8" r="1.2" fill="#c4c4c4"/>
<circle cx="917.6" cy="804.2" r="1.2" fill="#c4c4c4"/>
<circle cx="930" cy="804.2" r="1.2" fill="#c4c4c4"/>
<circle cx="930" cy="816.4" r="1.2" fill="#c4c4c4"/>
<path d="M954.4 807.6 V806.6 Q954.4 804.9 956.1 804.9 H966.4 Q968.1 804.9 968.1 806.6 V817 Q968.1 818.7 966.4 818.7 H965.4" fill="none" stroke="#c4c4c4" stroke-width="1.7"/>
<rect x="950.3" y="809.8" width="12.9" height="12.9" rx="1.6" fill="#c4c4c4"/>
<path d="M956.75 812.6 V820 M953 816.3 H960.5" stroke="#0a0a0a" stroke-width="1.9"/>
<path d="M992.4 813.3 H998" stroke="#c4c4c4" stroke-width="1.3"/><circle cx="990.8" cy="813.3" r="1.6" fill="none" stroke="#c4c4c4" stroke-width="1.1"/>
<circle cx="1003.2" cy="813.3" r="6" fill="#c4c4c4"/><path d="M1003.2 809.9 V816.7 M999.8 813.3 H1006.6" stroke="#0a0a0a" stroke-width="1.9"/>
<g transform="rotate(17 1038.5 813.5)" fill="none" stroke="#c4c4c4" stroke-width="1.3" stroke-linejoin="round"><path d="M1037.2 803 H1040.2 V809.4 H1037.2 Z"/><path d="M1033 809.4 H1044.4 V812.4 H1033 Z"/><path d="M1033 812.4 L1030.8 822.6 H1044.4 V812.4"/><path d="M1034.6 822.4 L1035.8 817.6 M1038 822.4 L1038.8 817.6 M1041.4 822.4 L1041.8 817.6"/></g>
<path d="M1072.4 803.2 H1083.4 V804.9 H1081.5 V811.6 Q1084.2 813.6 1084.2 816.6 H1078.6 V822.2 L1077.9 823.8 L1077.2 822.2 V816.6 H1071.6 Q1071.6 813.6 1074.3 811.6 V804.9 H1072.4 Z" fill="#c4c4c4"/>
<circle cx="1094.5" cy="804.9" r="6.6" fill="#08adee"/>
<path d="M1133 808.9 H1122.4 Q1120.6 808.9 1120.6 810.7 V821.4 Q1120.6 823.2 1122.4 823.2 H1138.8 Q1140.6 823.2 1140.6 821.4 V810.7 Q1140.6 808.9 1138.8 808.9 H1136.4" fill="none" stroke="#c4c4c4" stroke-width="1.4"/>
<path d="M1123.3 811.9 H1128.6 M1123.3 815.1 H1129.6 M1123.3 818.9 H1133.4" stroke="#c4c4c4" stroke-width="1.3"/>
<path d="M1134.7 803.2 Q1136.7 808 1134.7 812 Q1132.7 808 1134.7 803.2 Z M1134.7 810.5 V816.6" fill="none" stroke="#c4c4c4" stroke-width="1.1"/>
<path d="M1162.4 806.6 Q1169.5 808.5 1170.9 811.8 Q1172.5 808.5 1177.6 808 M1170.9 811.8 L1162.8 818.8" fill="none" stroke="#c4c4c4" stroke-width="1.3"/>
<circle cx="1162.3" cy="806.5" r="1.5" fill="#000" stroke="#c4c4c4" stroke-width="1.1"/>
<circle cx="1177.7" cy="808" r="1.5" fill="#000" stroke="#c4c4c4" stroke-width="1.1"/>
<circle cx="1162.7" cy="818.9" r="1.5" fill="#000" stroke="#c4c4c4" stroke-width="1.1"/>
<path d="M1171.8 815.8 V819.8 M1174.2 815.8 V819.8" stroke="#c4c4c4" stroke-width="0.9"/><circle cx="1170.9" cy="807.4" r="0.6" fill="#c4c4c4"/>
<path transform="translate(1267 679.8) rotate(0)" d="M0 -8.8 L7.7 -0.6 H3.3 V8.8 H-3.3 V-0.6 H-7.7 Z" fill="#bdbdbd"/>
<path transform="translate(1267 726.5) rotate(180)" d="M0 -8.8 L7.7 -0.6 H3.3 V8.8 H-3.3 V-0.6 H-7.7 Z" fill="#bdbdbd"/>
<path transform="translate(1244.3 702.4) rotate(-90)" d="M0 -8.8 L7.7 -0.6 H3.3 V8.8 H-3.3 V-0.6 H-7.7 Z" fill="#bdbdbd"/>
<path transform="translate(1289.7 702.4) rotate(90)" d="M0 -8.8 L7.7 -0.6 H3.3 V8.8 H-3.3 V-0.6 H-7.7 Z" fill="#bdbdbd"/>
<circle cx="1267" cy="702.3" r="6.4" fill="none" stroke="#bdbdbd" stroke-width="1.1"/>
<g transform="translate(1244.8 766) scale(1 1)" fill="none" stroke="#bdbdbd"><path d="M0 -11 V-3.4" stroke-width="2.4" stroke-linecap="round"/><path d="M-2.6 -5.6 Q-10.6 -4.6 -10.2 -0.6 Q-9.6 2.6 -3 3.6 M2.6 -5.6 Q10.6 -4.6 10.2 -0.6 Q9.8 2.4 5.6 3.2" stroke-width="2.3" stroke-linecap="round"/><path d="M0.8 0.6 L-3 3.6 L0.8 6.6" stroke-width="1.5" stroke-linecap="round" stroke-linejoin="round"/><path d="M0 4.6 V7.4" stroke-width="1.4"/><circle cx="0" cy="10.2" r="1.4" fill="#bdbdbd" stroke="none"/></g>
<g transform="translate(1288.6 766) scale(-1 1)" fill="none" stroke="#bdbdbd"><path d="M0 -11 V-3.4" stroke-width="2.4" stroke-linecap="round"/><path d="M-2.6 -5.6 Q-10.6 -4.6 -10.2 -0.6 Q-9.6 2.6 -3 3.6 M2.6 -5.6 Q10.6 -4.6 10.2 -0.6 Q9.8 2.4 5.6 3.2" stroke-width="2.3" stroke-linecap="round"/><path d="M0.8 0.6 L-3 3.6 L0.8 6.6" stroke-width="1.5" stroke-linecap="round" stroke-linejoin="round"/><path d="M0 4.6 V7.4" stroke-width="1.4"/><circle cx="0" cy="10.2" r="1.4" fill="#bdbdbd" stroke="none"/></g>
<path d="M1240.6 804.2 H1249.4 L1252.6 811.6 L1257.6 813.2 L1245 817.3 L1232.2 813.2 L1237.4 811.6 Z" fill="#bdbdbd"/>
<path d="M1288.3 804.4 L1297 807.2 L1292.6 807.6 L1295.6 816.4 H1281 L1284 807.6 L1279.6 807.2 Z" fill="#bdbdbd"/>
</svg>
<span class="t" style="left:62.9px;top:22.8px;font-size:14px;color:#8a8a8a;transform:scaleX(0.8899)">Search From Database</span>
<span class="t" style="left:70.0px;top:88.2px;font-size:14px;color:#c8c8c8;transform:scaleX(0.7710)">ƒ(x)</span>
<span class="t" style="left:120.7px;top:88.2px;font-size:14px;color:#ffffff;transform:scaleX(0.9340)">Extract</span>
<span class="t" style="left:193.0px;top:88.2px;font-size:14px;color:#c8c8c8;transform:scaleX(0.9132)">Aggregate</span>
<span class="t" style="left:284.5px;top:88.2px;font-size:14px;color:#c8c8c8;transform:scaleX(0.9197)">Merge</span>
<span class="t" style="left:353.4px;top:88.2px;font-size:14px;color:#c8c8c8;transform:scaleX(0.9187)">Link</span>
<span class="t" style="left:409.0px;top:88.2px;font-size:14px;color:#c8c8c8;transform:scaleX(0.9494)">Shortcut</span>
<span class="t" style="left:490.5px;top:88.2px;font-size:14px;color:#c8c8c8;transform:scaleX(0.9413)">Connector</span>
<span class="t" style="left:553.3px;top:26.5px;font-size:15px;color:#dadada;transform:scaleX(0.9135)">Demo2 / GOT_ExtractSTART</span>
<span class="t" style="left:740.2px;top:25.5px;font-size:15px;color:#dadada;transform:scaleX(1.0610)">*</span>
<span class="t" style="left:947.7px;top:23.0px;font-size:14px;color:#101010;transform:scaleX(0.9135)">Category</span>
<span class="t" style="left:1043.2px;top:23.0px;font-size:14px;color:#d0d0d0;transform:scaleX(0.9372)">Property</span>
<span class="t" style="left:1152.3px;top:23.0px;font-size:14px;color:#d0d0d0;transform:scaleX(0.8460)">Tag</span>
<span class="t" style="left:1220.4px;top:23.0px;font-size:14px;color:#101010;transform:scaleX(0.9122)">Relationship</span>
<span class="t" style="left:1159.0px;top:77.6px;font-size:14px;color:#1fc3d9;transform:scaleX(0.9376)">Characters 0/387</span>
<span class="t" style="left:1192.0px;top:111.5px;font-size:14px;color:#e22b2b;transform:scaleX(0.9524)">House 0/14</span>
<span class="t" style="left:1137.9px;top:152.3px;font-size:14px;color:#f08565;transform:scaleX(0.9140)">BELONGS_TO 0/387</span>
<span class="t" style="left:85.2px;top:165.0px;font-size:14px;color:#cfcfcf;transform:scaleX(0.9114)">Characters</span>
<span class="t" style="left:234.4px;top:165.0px;font-size:14px;color:#ffffff;transform:scaleX(0.8788)">BELONGS_TO</span>
<span class="t" style="left:445.6px;top:165.0px;font-size:14px;color:#ffffff;transform:scaleX(0.9168)">House</span>
<span class="t" style="left:74.2px;top:232.8px;font-size:14px;color:#d6d6d6;transform:scaleX(0.9195)">Create Category From Property</span>
<span class="t" style="left:378.9px;top:236.0px;font-size:14px;color:#cfcfcf;transform:scaleX(0.9046)">houseName</span>
<span class="t" style="left:381.8px;top:278.0px;font-size:14px;color:#cfcfcf;transform:scaleX(0.9116)">Select All</span>
<span class="t" style="left:104.0px;top:343.2px;font-size:14px;color:#f2f2f2;transform:scaleX(0.9199)">characterIm</span>
<span class="t" style="left:85.0px;top:363.2px;font-size:14px;color:#f2f2f2;transform:scaleX(0.9204)">age</span>
<span class="t" style="left:216.8px;top:343.2px;font-size:14px;color:#f2f2f2;transform:scaleX(0.9178)">characterNa</span>
<span class="t" style="left:198.6px;top:363.2px;font-size:14px;color:#f2f2f2;transform:scaleX(0.9099)">me</span>
<span class="t" style="left:329.7px;top:343.2px;font-size:14px;color:#f2f2f2;transform:scaleX(0.9073)">houseName</span>
<span class="t" style="left:442.0px;top:343.2px;font-size:14px;color:#f2f2f2;transform:scaleX(0.9409)">killedBy</span>
<span class="t" style="left:554.9px;top:343.2px;font-size:14px;color:#f2f2f2;transform:scaleX(0.9253)">kills</span>
<span class="t" style="left:198.9px;top:405.8px;font-size:14px;color:#8c8c8c;transform:scaleX(0.9245)">Addam Marbra</span>
<span class="t" style="left:198.9px;top:425.8px;font-size:14px;color:#8c8c8c;transform:scaleX(0.9372)">nd</span>
<span class="t" style="left:536.5px;top:405.8px;font-size:14px;color:#8c8c8c;transform:scaleX(1.0004)">0</span>
<span class="t" style="left:85.2px;top:497.2px;font-size:14px;color:#f2f2f2;transform:scaleX(0.9264)">Selected Property</span>
<span class="t" style="left:229.2px;top:497.2px;font-size:14px;color:#f2f2f2;transform:scaleX(0.9322)">New Property Name</span>
<span class="t" style="left:390.0px;top:497.2px;font-size:14px;color:#f2f2f2;transform:scaleX(0.8705)">Key</span>
<span class="t" style="left:518.3px;top:497.2px;font-size:14px;color:#f2f2f2;transform:scaleX(0.9253)">Split</span>
<span class="t" style="left:103.0px;top:548.2px;font-size:14px;color:#c4c4c4;transform:scaleX(0.9046)">houseName</span>
<span class="t" style="left:238.5px;top:548.2px;font-size:14px;color:#ffffff;transform:scaleX(0.9113)">houseName</span>
<span class="t" style="left:123.4px;top:617.3px;font-size:14px;color:#d6d6d6;transform:scaleX(0.9328)">Inherit Relationship</span>
<span class="t" style="left:123.4px;top:650.0px;font-size:14px;color:#d6d6d6;transform:scaleX(0.9256)">Skip Empty(&quot;&quot;|null|undefined)</span>
<span class="t" style="left:87.6px;top:708.8px;font-size:14px;color:#cfcfcf;transform:scaleX(0.8603)">Run</span>
<span class="t" style="left:60.3px;top:744.8px;font-size:14px;color:#d0d0d0;transform:scaleX(0.9513)">[16:02:23] Convert 384</span>
<span class="t" style="left:60.3px;top:764.4px;font-size:14px;color:#d0d0d0;transform:scaleX(0.9513)">[16:02:23] Convert 385</span>
<span class="t" style="left:60.3px;top:784.0px;font-size:14px;color:#d0d0d0;transform:scaleX(0.9513)">[16:02:23] Convert 386</span>
<span class="t" style="left:60.3px;top:803.6px;font-size:14px;color:#d0d0d0;transform:scaleX(0.9452)">[16:02:23] Extract finished</span>
<span class="t" style="left:1092.3px;top:795.2px;font-size:9px;color:#062a45;transform:scaleX(0.9171)">0</span>
</body></html>
